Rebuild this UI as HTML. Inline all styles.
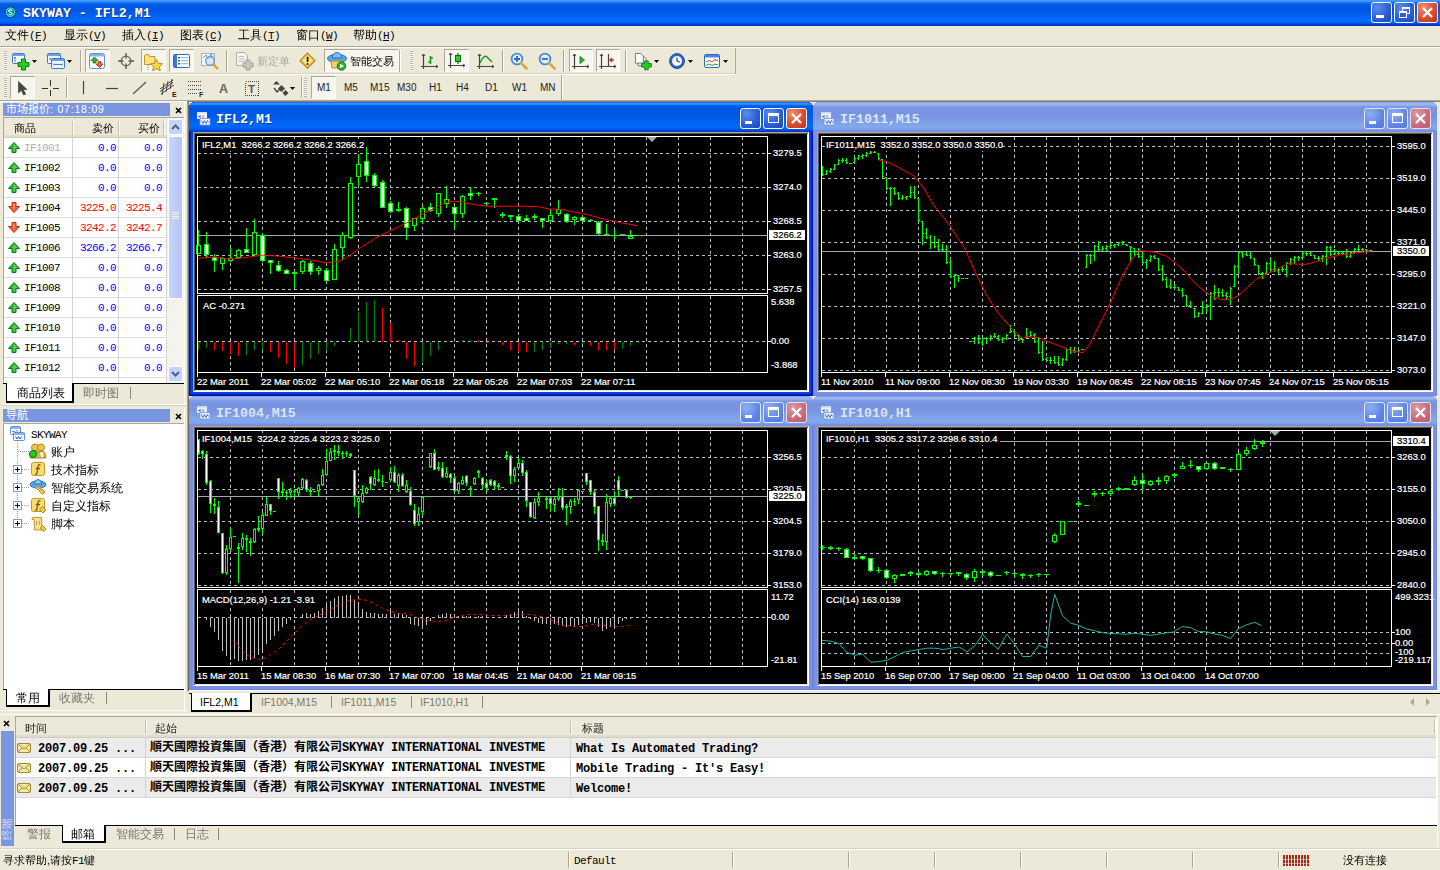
<!DOCTYPE html>
<html lang="zh"><head><meta charset="utf-8"><title>SKYWAY - IFL2,M1</title>
<style>
*{box-sizing:border-box;margin:0;padding:0}
html,body{width:1440px;height:870px;overflow:hidden;background:#ece9d8}
body{font-family:"Liberation Sans","Noto Sans CJK SC",sans-serif;font-size:12px;color:#000;position:relative}
#root{position:absolute;left:0;top:0;width:1440px;height:870px;overflow:hidden;background:#ece9d8}
.a{position:absolute}
.m{font-family:"Liberation Mono","WenQuanYi Zen Hei",monospace;font-size:11px;letter-spacing:-0.6px}
.th{font-family:"Liberation Sans",sans-serif;font-size:10.5px;letter-spacing:.8px}
.mb{font-family:"Liberation Mono","Noto Sans CJK SC",monospace;letter-spacing:-0.2px;font-weight:bold}
.cj{font-family:"Liberation Sans","WenQuanYi Zen Hei","Noto Sans CJK SC",sans-serif;font-size:12px;line-height:14px;white-space:nowrap}
.tt{font-family:"Liberation Mono","Noto Sans CJK SC",monospace;font-weight:bold;font-size:13.3px;color:#fff;white-space:nowrap;letter-spacing:0}
#title{left:0;top:0;width:1440px;height:26px;background:linear-gradient(to bottom,#4598ff 0,#3d90fb 1.5px,#0a6cf4 3px,#0060ec 4px,#0058e6 6px,#0055e2 9px,#005ae8 12px,#0062f4 16px,#066bff 20px,#0468fa 22px,#0054e0 23.5px,#0038c8 24.5px,#0034c0 26px)}
.wbtn{position:absolute;width:21px;height:21px;border:1px solid #fff;border-radius:3px}
.wb{background:radial-gradient(circle at 30% 25%,#5a8cf0 0,#2c5fd8 55%,#1e48b8 100%)}
.wr{background:radial-gradient(circle at 30% 25%,#f09078 0,#dc4c2c 55%,#b83418 100%)}
.wbi{background:radial-gradient(circle at 30% 25%,#8fb0f4 0,#5f86e6 60%,#5078d8 100%);border-color:#dfe8fb}
.wri{background:radial-gradient(circle at 30% 25%,#dc98a4 0,#c86a7c 60%,#b85c70 100%);border-color:#f0dce4}
.tb-chk{position:absolute;border:1px solid #aca899;border-right-color:#fff;border-bottom-color:#fff;background:#f6f5ee}
.sepv{position:absolute;width:2px;border-left:1px solid #aca899;border-right:1px solid #fff}
.grip{position:absolute;width:3px;background:repeating-linear-gradient(to bottom,#bab7a6 0,#bab7a6 1px,#fff 1px,#fff 2px)}
.tf{position:absolute;top:82px;font-size:10px;color:#222;font-family:"Liberation Sans",sans-serif;white-space:nowrap}
.win{position:absolute;border-radius:6px 6px 0 0}
.wact{background:#0044e6;box-shadow:inset 1px 0 0 #0010a0,inset -1px 0 0 #0010a0,inset 0 -1px 0 #0010a0,inset 2px 0 0 #0024c0,inset -2px 0 0 #0020b4,inset 0 -2px 0 #0020b4}
.wina{background:#7a90e4;box-shadow:inset 1px 0 0 #6c84dc,inset -1px 0 0 #6c84dc,inset 0 -1px 0 #6c84dc}
.wtitle{position:absolute;left:0;top:0;width:100%;height:30px;border-radius:6px 6px 0 0}
.wact .wtitle{background:linear-gradient(to bottom,#0848d8 0,#3a92f8 1px,#2a86f6 2.5px,#0068f0 3.5px,#005ae8 5px,#0056e4 8px,#0058e6 14px,#0060f0 18px,#0068fa 22px,#0066f8 26px,#0050e0 28px,#0038c8 29.5px,#0038c8 30px)}
.wina .wtitle{background:linear-gradient(to bottom,#6f88e0 0,#9db9f0 1px,#98b4ee 3px,#7d9ee6 4.5px,#7893e0 7px,#7994e0 14px,#7e9ee6 19px,#82a8ea 24px,#80a4e8 27px,#7a92e4 28.5px,#7a86e8 30px)}
.client{position:absolute;left:4px;top:30px;width:616px;height:260px;background:#000;border:1px solid #aca899;border-right-color:#fff;border-bottom-color:#fff;box-shadow:inset 1px 1px 0 #5a584e,inset -1px -1px 0 #ece9d8}
.hdr{position:absolute;background:#7a96df;color:#fff;font-size:11px;line-height:13px;white-space:nowrap;overflow:hidden}
.lv-h{position:absolute;background:#ece9d8;border-bottom:1px solid #d0cdbc;box-shadow:inset 0 -2px 0 #e0ddcc}
.tabact{position:absolute;background:#fff;border:1px solid #000;border-top:none;border-right-width:2px;border-bottom-width:2px}
.gray{color:#7a7a70}
.c11{font-size:11px}
.cb{font-family:"Liberation Mono","Noto Sans CJK SC",sans-serif;font-weight:bold}
</style></head>
<body><div id="root">
<div class="a" id="title"></div>
<svg class="a" style="left:4px;top:5px" width="16" height="16" viewBox="0 0 16 16" ><circle cx="6.4" cy="7.2" r="5.4" fill="#1fd4e0" stroke="#0a3a50" stroke-width="1"/><circle cx="6.4" cy="7.2" r="3.3" fill="#0c6c80"/><path d="M8.2 5.6 Q6.4 4.2 4.8 5.6 Q4.2 7 6.4 7.2 Q8.6 7.6 8 8.9 Q6.4 10.2 4.6 8.9" stroke="#fff" stroke-width="1.1" fill="none"/></svg>
<div class="a tt" style="left:23px;top:6px;line-height:16px;text-shadow:1px 1px 0 #0a3a9a">SKYWAY - IFL2,M1</div>
<div class="wbtn wb" style="left:1371px;top:2px"></div><div class="a" style="left:1376px;top:15px;width:8px;height:3px;background:#fff"></div>
<div class="wbtn wb" style="left:1394px;top:2px"></div>
<svg class="a" style="left:1394px;top:2px" width="21" height="21" shape-rendering="crispEdges"><rect x="8.5" y="5.5" width="7" height="6" fill="none" stroke="#fff"/><rect x="8" y="5" width="8" height="2" fill="#fff"/><rect x="5.5" y="9.5" width="7" height="6" fill="#2c5fd8" stroke="#fff"/><rect x="5" y="9" width="8" height="2" fill="#fff"/></svg>
<div class="wbtn wr" style="left:1417px;top:2px"></div>
<svg class="a" style="left:1417px;top:2px" width="21" height="21"><path d="M6 6 L15 15 M15 6 L6 15" stroke="#fff" stroke-width="2.2" fill="none"/></svg>
<div class="a cj" style="left:5px;top:28px">文件<span class="m">(F)</span></div>
<div class="a" style="left:35px;top:40px;width:6px;height:1px;background:#000"></div>
<div class="a cj" style="left:64px;top:28px">显示<span class="m">(V)</span></div>
<div class="a" style="left:94px;top:40px;width:6px;height:1px;background:#000"></div>
<div class="a cj" style="left:122px;top:28px">插入<span class="m">(I)</span></div>
<div class="a" style="left:152px;top:40px;width:6px;height:1px;background:#000"></div>
<div class="a cj" style="left:180px;top:28px">图表<span class="m">(C)</span></div>
<div class="a" style="left:210px;top:40px;width:6px;height:1px;background:#000"></div>
<div class="a cj" style="left:238px;top:28px">工具<span class="m">(T)</span></div>
<div class="a" style="left:268px;top:40px;width:6px;height:1px;background:#000"></div>
<div class="a cj" style="left:296px;top:28px">窗口<span class="m">(W)</span></div>
<div class="a" style="left:326px;top:40px;width:6px;height:1px;background:#000"></div>
<div class="a cj" style="left:353px;top:28px">帮助<span class="m">(H)</span></div>
<div class="a" style="left:383px;top:40px;width:6px;height:1px;background:#000"></div>
<div class="a" style="left:0;top:46px;width:1440px;height:1px;background:#aca899"></div>
<div class="a" style="left:0;top:47px;width:1440px;height:1px;background:#fff"></div>
<div class="a" style="left:0;top:73px;width:736px;height:1px;background:#d8d4c2"></div><div class="a" style="left:0;top:74px;width:736px;height:1px;background:#fff"></div>
<div class="a" style="left:735px;top:48px;width:1px;height:26px;background:#aca899"></div>
<div class="grip" style="left:4px;top:51px;height:20px"></div>
<div class="grip" style="left:410px;top:51px;height:20px"></div>
<div class="sepv" style="left:80px;top:50px;height:22px"></div>
<div class="sepv" style="left:226px;top:50px;height:22px"></div>
<div class="sepv" style="left:399px;top:50px;height:22px"></div>
<div class="sepv" style="left:502px;top:50px;height:22px"></div>
<div class="sepv" style="left:563px;top:50px;height:22px"></div>
<div class="sepv" style="left:625px;top:50px;height:22px"></div>
<div class="tb-chk" style="left:85px;top:49px;width:25px;height:23px"></div>
<div class="tb-chk" style="left:141px;top:49px;width:25px;height:23px"></div>
<div class="tb-chk" style="left:169px;top:49px;width:25px;height:23px"></div>
<div class="tb-chk" style="left:324px;top:49px;width:75px;height:23px"></div>
<div class="tb-chk" style="left:444px;top:49px;width:25px;height:23px"></div>
<div class="tb-chk" style="left:569px;top:49px;width:24px;height:23px"></div>
<div class="tb-chk" style="left:596px;top:49px;width:24px;height:23px"></div>
<svg class="a" style="left:0;top:44px" width="740" height="32" viewBox="0 0 740 32"><g transform="translate(12,9)"><rect x="0.5" y="0.5" width="12" height="10" rx="1" fill="#fff" stroke="#3a78d0"/><rect x="1" y="1" width="11" height="2" fill="#6aa0e8"/><path d="M3 4 L3 9 M2 5.5 L3 4 L4 5.5" stroke="#5080c0" fill="none"/><path d="M9.5 6 L13.5 6 L13.5 9.5 L17 9.5 L17 13.5 L13.5 13.5 L13.5 17 L9.5 17 L9.5 13.5 L6 13.5 L6 9.5 L9.5 9.5 Z" fill="#2cc82c" stroke="#0a7a14" stroke-width="1"/></g><g transform="translate(32,16)"><path d="M0 0 L5 0 L2.5 3 Z" fill="#000"/></g><g transform="translate(47,9)"><rect x="0.5" y="0.5" width="13" height="10" rx="1" fill="#eef4ff" stroke="#3a78d0"/><rect x="1" y="1" width="12" height="2" fill="#6aa0e8"/><path d="M3 6 L11 6 M3 5 L3 7 M11 5 L11 7" stroke="#5080c0"/><rect x="4.5" y="5.5" width="13" height="10" rx="1" fill="#eef4ff" stroke="#3a78d0"/><rect x="5" y="6" width="12" height="2" fill="#6aa0e8"/><path d="M7 11.5 L15 11.5 M7 10.5 L7 12.5 M15 10.5 L15 12.5" stroke="#5080c0"/></g><g transform="translate(67,16)"><path d="M0 0 L5 0 L2.5 3 Z" fill="#000"/></g><g transform="translate(89,9)"><rect x="0.5" y="0.5" width="15" height="15" rx="2" fill="#fff" stroke="#5a90e0" stroke-width="1"/><rect x="1" y="1" width="14" height="2.5" fill="#8ab4f0"/><path d="M5.5 4 L9 7.5 L7 7.5 L7 10 L4 10 L4 7.5 L2 7.5 Z" fill="#2cb82c" stroke="#0a7a14" stroke-width=".8"/><path d="M10.5 14.5 L14 11 L12 11 L12 8.5 L9 8.5 L9 11 L7 11 Z" fill="#f0603c" stroke="#b83010" stroke-width=".8"/></g><g transform="translate(118,9)"><circle cx="8" cy="8" r="4.8" fill="none" stroke="#666" stroke-width="1.3"/><path d="M8 0 L8 5.5 M8 10.5 L8 16 M0 8 L5.5 8 M10.5 8 L16 8" stroke="#555" stroke-width="1.3"/></g><g transform="translate(144,9)"><path d="M0.5 3 L0.5 11.5 L11 11.5 L11 3.5 L5.5 3.5 L4.5 1.5 L1.5 1.5 Z" fill="#f8e08a" stroke="#c09a28"/><path d="M4 12 L4 17" stroke="#777" stroke-dasharray="1 1"/><path d="M12.5 6.5 L14.3 10.3 L18.5 10.8 L15.4 13.6 L16.3 17.8 L12.5 15.7 L8.7 17.8 L9.6 13.6 L6.5 10.8 L10.7 10.3 Z" fill="#f8d848" stroke="#b8901c" stroke-width="1"/></g><g transform="translate(173,10)"><rect x="0.5" y="0.5" width="16" height="13" rx="1" fill="#fff" stroke="#2a68c8" stroke-width="1"/><rect x="1" y="1" width="3" height="12" fill="#3a78d8"/><rect x="5" y="3" width="2" height="1.5" fill="#d02020"/><rect x="5" y="6" width="2" height="1.5" fill="#209020"/><rect x="5" y="9" width="2" height="1.5" fill="#d02020"/><path d="M8 3.7 L15 3.7 M8 6.7 L15 6.7 M8 9.7 L15 9.7" stroke="#8aa8d8"/></g><g transform="translate(201,8)"><rect x="0.5" y="1.5" width="13" height="12" fill="#f4f8ff" stroke="#9ab0d0"/><path d="M2 6 L5 3 L7 7 L10 2 L12 5" stroke="#6a88c0" fill="none"/><circle cx="9" cy="9" r="4.2" fill="#cfe4fa" fill-opacity=".8" stroke="#7a98c8" stroke-width="1.4"/><path d="M12.2 12.2 L17 17" stroke="#d8a030" stroke-width="2.4"/></g><g transform="translate(236,8)"><path d="M0.5 0.5 L8.5 0.5 L11.5 3.5 L11.5 13.5 L0.5 13.5 Z" fill="#f4f4f0" stroke="#b0b0a8"/><path d="M2.5 4.5 L8 4.5 M2.5 7 L9 7 M2.5 9.5 L9 9.5" stroke="#c0c0b8"/><path d="M10 8 L14 8 L14 11 L17 11 L17 15 L14 15 L14 18 L10 18 L10 15 L7 15 L7 11 L10 11 Z" fill="#c8c8c0" stroke="#a0a098"/></g><g transform="translate(299,8)"><path d="M8.5 1.2 L16 8.7 L8.5 16.2 L1 8.7 Z" fill="#f6cc48" stroke="#b08820" stroke-width="1.2"/><path d="M8.5 3.5 L13.5 8.7 L8.5 13.8 L3.5 8.7 Z" fill="#fbe48a"/><rect x="7.7" y="4.8" width="1.8" height="5.2" fill="#222"/><rect x="7.7" y="11.2" width="1.8" height="1.8" fill="#222"/></g><g transform="translate(327,8)"><ellipse cx="10" cy="6.5" rx="9.5" ry="4.2" fill="#58a8e8" stroke="#2a70b8"/><path d="M5 6 Q6 0.5 10 0.5 Q14 0.5 15 6 Z" fill="#78c0f4" stroke="#2a70b8"/><path d="M4 9 L5 16 L14 16 L16 9 Z" fill="#f0d070" stroke="#b89028"/><circle cx="14.5" cy="14" r="4.2" fill="#28b828" stroke="#0a7a14"/><path d="M13 11.8 L13 16.2 L17 14 Z" fill="#fff"/></g><g transform="translate(421,9)"><path d="M2.5 1 L2.5 16 M0 13.5 L17 13.5" stroke="#444" stroke-width="1.2"/><path d="M1 3 L2.5 1 L4 3 M15 12 L17 13.5 L15 15" stroke="#444" fill="none"/><path d="M9.5 3 L9.5 11 M9.5 5 L12 5 M7 9 L9.5 9" stroke="#1a9a1a" stroke-width="1.6"/></g><g transform="translate(448,8)"><path d="M2.5 1 L2.5 16 M0 13.5 L17 13.5" stroke="#444" stroke-width="1.2"/><path d="M1 3 L2.5 1 L4 3 M15 12 L17 13.5 L15 15" stroke="#444" fill="none"/><path d="M10 1 L10 12" stroke="#0a6a0a" stroke-width="1.2"/><rect x="7.5" y="3.5" width="5" height="6" fill="#28c828" stroke="#0a6a0a"/></g><g transform="translate(477,9)"><path d="M2.5 1 L2.5 16 M0 13.5 L17 13.5" stroke="#444" stroke-width="1.2"/><path d="M1 3 L2.5 1 L4 3 M15 12 L17 13.5 L15 15" stroke="#444" fill="none"/><path d="M3 10 Q7 1 10 4 Q13 7 15 9" stroke="#1a9a1a" stroke-width="1.5" fill="none"/></g><g transform="translate(510,8)"><circle cx="7" cy="7" r="5.4" fill="#e4f0fc" stroke="#4a88d8" stroke-width="1.8"/><path d="M11.2 11.2 L16.5 16.5" stroke="#d8a838" stroke-width="2.6" stroke-linecap="round"/><path d="M4 7 L10 7 M7 4 L7 10" stroke="#2a68c8" stroke-width="1.8"/></g><g transform="translate(538,8)"><circle cx="7" cy="7" r="5.4" fill="#e4f0fc" stroke="#4a88d8" stroke-width="1.8"/><path d="M11.2 11.2 L16.5 16.5" stroke="#d8a838" stroke-width="2.6" stroke-linecap="round"/><path d="M4 7 L10 7" stroke="#2a68c8" stroke-width="1.8"/></g><g transform="translate(572,9)"><path d="M2.5 1 L2.5 16 M0 13.5 L17 13.5" stroke="#444" stroke-width="1.2"/><path d="M1 3 L2.5 1 L4 3 M15 12 L17 13.5 L15 15" stroke="#444" fill="none"/><path d="M8 3.5 L12.5 7 L8 10.5 Z" fill="#28b828" stroke="#0a7a14" stroke-width=".8"/></g><g transform="translate(599,9)"><path d="M2.5 1 L2.5 16 M0 13.5 L17 13.5" stroke="#444" stroke-width="1.2"/><path d="M1 3 L2.5 1 L4 3 M15 12 L17 13.5 L15 15" stroke="#444" fill="none"/><path d="M9.5 1 L9.5 13" stroke="#444" stroke-width="1.2"/><path d="M15 7 L11 7 M13 5 L11 7 L13 9" stroke="#d03020" stroke-width="1.4" fill="none"/></g><g transform="translate(635,9)"><g transform="scale(.88)"><path d="M3.5 3.5 L3.5 14.5 L12.5 14.5 L12.5 6.5 L9.5 3.5 Z" fill="#fff" stroke="#666"/><path d="M0.5 0.5 L0.5 11.5 L9.5 11.5 L9.5 3.5 L6.5 0.5 Z" fill="#fff" stroke="#666"/><path d="M11 9 L15 9 L15 12 L18.5 12 L18.5 16 L15 16 L15 19 L11 19 L11 16 L7.5 16 L7.5 12 L11 12 Z" fill="#2cc82c" stroke="#0a7a14"/></g></g><g transform="translate(654,16)"><path d="M0 0 L5 0 L2.5 3 Z" fill="#000"/></g><g transform="translate(669,9)"><circle cx="8" cy="8" r="7.4" fill="#2a68c8" stroke="#1a4898" stroke-width="1"/><circle cx="8" cy="8" r="5" fill="#f4f8ff"/><path d="M8 4.5 L8 8 L10.8 9.2" stroke="#333" stroke-width="1.1" fill="none"/></g><g transform="translate(688,16)"><path d="M0 0 L5 0 L2.5 3 Z" fill="#000"/></g><g transform="translate(704,10)"><rect x="0.5" y="0.5" width="15" height="13" rx="1.5" fill="#fff" stroke="#2a68c8" stroke-width="1"/><rect x="1" y="1" width="14" height="2.5" fill="#4a88e0"/><path d="M2 8 L5 6.5 L8 8 L11 5.5 L14 7" stroke="#d04020" fill="none"/><path d="M2 11.5 L5 10 L8 11.5 L11 10 L14 11" stroke="#209a20" fill="none"/></g><g transform="translate(723,16)"><path d="M0 0 L5 0 L2.5 3 Z" fill="#000"/></g></svg>
<div class="a cj c11" style="left:257px;top:54px;color:#aca899">新定单</div>
<div class="a cj c11" style="left:350px;top:54px">智能交易</div>
<div class="a" style="left:0;top:100px;width:1440px;height:1px;background:#aca899"></div>
<div class="a" style="left:0;top:101px;width:1440px;height:1px;background:#fff"></div>
<div class="grip" style="left:4px;top:78px;height:19px"></div>
<div class="grip" style="left:304px;top:78px;height:19px"></div>
<div class="a" style="left:561px;top:75px;width:1px;height:25px;background:#aca899"></div>
<div class="a" style="left:562px;top:75px;width:1px;height:25px;background:#fff"></div>
<div class="sepv" style="left:66px;top:77px;height:21px"></div>
<div class="sepv" style="left:301px;top:77px;height:21px"></div>
<div class="tb-chk" style="left:10px;top:76px;width:25px;height:23px"></div>
<div class="tb-chk" style="left:311px;top:76px;width:25px;height:23px"></div>
<svg class="a" style="left:0;top:74px" width="310" height="27" viewBox="0 0 310 27"><g transform="translate(18,7)"><path d="M0.5 0.5 L0.5 12 L3.3 9.3 L5.6 14 L7.6 13 L5.3 8.5 L9 8.5 Z" fill="#444" stroke="#333" stroke-width=".6"/></g><g transform="translate(42,6)"><path d="M8.5 0 L8.5 6 M8.5 10 L8.5 16 M0 8.5 L6 8.5 M11 8.5 L17 8.5" stroke="#333" stroke-width="1" shape-rendering="crispEdges"/></g><g transform="translate(83,7)"><path d="M0.5 0 L0.5 13" stroke="#444" stroke-width="1.2"/></g><g transform="translate(106,14)"><path d="M0 0.5 L12 0.5" stroke="#444" stroke-width="1.2"/></g><g transform="translate(133,8)"><path d="M0 12 L13 0" stroke="#555" stroke-width="1.2"/></g><g transform="translate(160,6)"><path d="M0 9 L13 0 M1 14 L14 5 M0 11.5 L13 2.5 M4 3 L2 15 M8 1 L6 12 M12 -1 L10 9" stroke="#444" stroke-width="1" fill="none"/><text x="12" y="17" font-size="7" font-weight="bold" font-family="Liberation Sans,sans-serif" fill="#222">E</text></g><g transform="translate(188,7)"><path d="M0 0.5 L14 0.5 M0 4.5 L14 4.5 M0 8.5 L14 8.5 M0 12.5 L10 12.5" stroke="#444" stroke-dasharray="1 1"/><text x="11" y="16" font-size="7" font-weight="bold" font-family="Liberation Sans,sans-serif" fill="#222">F</text></g><g transform="translate(219,7)"><text x="0" y="11.5" font-size="12.5" font-weight="bold" font-family="Liberation Sans,sans-serif" fill="#666">A</text></g><g transform="translate(245,7)"><rect x="0.5" y="0.5" width="13" height="14" fill="none" stroke="#444" stroke-dasharray="1 1" shape-rendering="crispEdges"/><text x="3" y="12" font-size="11.5" font-weight="bold" font-family="Liberation Sans,sans-serif" fill="#555">T</text></g><g transform="translate(272,7)"><path d="M4.5 0 L8 3.5 L1 3.5 Z M9.5 4 L13 7.5 L9.5 11 L6 7.5 Z M13.5 9 L16.5 12 L13.5 15 L10.5 12 Z" fill="#444"/><path d="M2 7 L5 11 L8 8" stroke="#444" stroke-width="1.4" fill="none"/></g><g transform="translate(290,13)"><path d="M0 0 L5 0 L2.5 3 Z" fill="#000"/></g></svg>
<div class="tf" style="left:317px">M1</div>
<div class="tf" style="left:344px">M5</div>
<div class="tf" style="left:370px">M15</div>
<div class="tf" style="left:397px">M30</div>
<div class="tf" style="left:429px">H1</div>
<div class="tf" style="left:456px">H4</div>
<div class="tf" style="left:485px">D1</div>
<div class="tf" style="left:512px">W1</div>
<div class="tf" style="left:540px">MN</div>
<div class="hdr" style="left:3px;top:103px;width:167px;height:13px;padding-left:3px">市场报价<span class="th">: 07:18:09</span></div>
<svg class="a" style="left:175px;top:107px" width="8" height="7" viewBox="0 0 8 7" ><path d="M1 1 L6 6 M6 1 L1 6" stroke="#000" stroke-width="1.7" fill="none"/></svg>
<div class="a" style="left:3px;top:117px;width:181px;height:266px;background:#fff;border-left:1px solid #aca899;border-top:1px solid #aca899"></div>
<div class="lv-h" style="left:4px;top:118px;width:164px;height:20px"></div>
<div class="a" style="left:72px;top:121px;width:1px;height:14px;background:#c5c2b2"></div><div class="a" style="left:73px;top:121px;width:1px;height:14px;background:#fff"></div>
<div class="a" style="left:118px;top:121px;width:1px;height:14px;background:#c5c2b2"></div><div class="a" style="left:119px;top:121px;width:1px;height:14px;background:#fff"></div>
<div class="a" style="left:163px;top:121px;width:1px;height:14px;background:#c5c2b2"></div><div class="a" style="left:164px;top:121px;width:1px;height:14px;background:#fff"></div>
<div class="a cj c11" style="left:14px;top:121px">商品</div>
<div class="a cj c11" style="left:92px;top:121px">卖价</div>
<div class="a cj c11" style="left:138px;top:121px">买价</div>
<div class="a" style="left:4px;top:157px;width:163px;height:1px;background:#dcdcdc"></div>
<svg class="a" style="left:8px;top:142px" width="12" height="11" viewBox="0 0 12 11" ><path d="M6 0.5 L11.5 6.5 L8 6.5 L8 10.5 L4 10.5 L4 6.5 L0.5 6.5 Z" fill="#2eb82e" stroke="#0e7a1a" stroke-width="1"/><path d="M6 2 L9.5 6 L7 6 L7 9.5 L5.5 9.5 L5.5 4 Z" fill="#7be07b" opacity=".6"/></svg>
<div class="a cj" style="left:24px;top:140px;color:#b0b0b0"><span class="m">IF1001</span></div>
<div class="a cj" style="left:73px;top:140px;width:43px;text-align:right;color:#0000ff"><span class="m">0.0</span></div>
<div class="a cj" style="left:119px;top:140px;width:43px;text-align:right;color:#0000ff"><span class="m">0.0</span></div>
<div class="a" style="left:4px;top:177px;width:163px;height:1px;background:#dcdcdc"></div>
<svg class="a" style="left:8px;top:162px" width="12" height="11" viewBox="0 0 12 11" ><path d="M6 0.5 L11.5 6.5 L8 6.5 L8 10.5 L4 10.5 L4 6.5 L0.5 6.5 Z" fill="#2eb82e" stroke="#0e7a1a" stroke-width="1"/><path d="M6 2 L9.5 6 L7 6 L7 9.5 L5.5 9.5 L5.5 4 Z" fill="#7be07b" opacity=".6"/></svg>
<div class="a cj" style="left:24px;top:160px;color:#000"><span class="m">IF1002</span></div>
<div class="a cj" style="left:73px;top:160px;width:43px;text-align:right;color:#0000ff"><span class="m">0.0</span></div>
<div class="a cj" style="left:119px;top:160px;width:43px;text-align:right;color:#0000ff"><span class="m">0.0</span></div>
<div class="a" style="left:4px;top:197px;width:163px;height:1px;background:#dcdcdc"></div>
<svg class="a" style="left:8px;top:182px" width="12" height="11" viewBox="0 0 12 11" ><path d="M6 0.5 L11.5 6.5 L8 6.5 L8 10.5 L4 10.5 L4 6.5 L0.5 6.5 Z" fill="#2eb82e" stroke="#0e7a1a" stroke-width="1"/><path d="M6 2 L9.5 6 L7 6 L7 9.5 L5.5 9.5 L5.5 4 Z" fill="#7be07b" opacity=".6"/></svg>
<div class="a cj" style="left:24px;top:180px;color:#000"><span class="m">IF1003</span></div>
<div class="a cj" style="left:73px;top:180px;width:43px;text-align:right;color:#0000ff"><span class="m">0.0</span></div>
<div class="a cj" style="left:119px;top:180px;width:43px;text-align:right;color:#0000ff"><span class="m">0.0</span></div>
<div class="a" style="left:4px;top:217px;width:163px;height:1px;background:#dcdcdc"></div>
<svg class="a" style="left:8px;top:202px" width="12" height="11" viewBox="0 0 12 11" ><path d="M6 10.5 L11.5 4.5 L8 4.5 L8 0.5 L4 0.5 L4 4.5 L0.5 4.5 Z" fill="#f0603c" stroke="#b83010" stroke-width="1"/><path d="M5 1.5 L6.5 1.5 L6.5 7 L5 5.5 Z" fill="#ffb09a" opacity=".7"/></svg>
<div class="a cj" style="left:24px;top:200px;color:#000"><span class="m">IF1004</span></div>
<div class="a cj" style="left:73px;top:200px;width:43px;text-align:right;color:#ff0000"><span class="m">3225.0</span></div>
<div class="a cj" style="left:119px;top:200px;width:43px;text-align:right;color:#ff0000"><span class="m">3225.4</span></div>
<div class="a" style="left:4px;top:237px;width:163px;height:1px;background:#dcdcdc"></div>
<svg class="a" style="left:8px;top:222px" width="12" height="11" viewBox="0 0 12 11" ><path d="M6 10.5 L11.5 4.5 L8 4.5 L8 0.5 L4 0.5 L4 4.5 L0.5 4.5 Z" fill="#f0603c" stroke="#b83010" stroke-width="1"/><path d="M5 1.5 L6.5 1.5 L6.5 7 L5 5.5 Z" fill="#ffb09a" opacity=".7"/></svg>
<div class="a cj" style="left:24px;top:220px;color:#000"><span class="m">IF1005</span></div>
<div class="a cj" style="left:73px;top:220px;width:43px;text-align:right;color:#ff0000"><span class="m">3242.2</span></div>
<div class="a cj" style="left:119px;top:220px;width:43px;text-align:right;color:#ff0000"><span class="m">3242.7</span></div>
<div class="a" style="left:4px;top:257px;width:163px;height:1px;background:#dcdcdc"></div>
<svg class="a" style="left:8px;top:242px" width="12" height="11" viewBox="0 0 12 11" ><path d="M6 0.5 L11.5 6.5 L8 6.5 L8 10.5 L4 10.5 L4 6.5 L0.5 6.5 Z" fill="#2eb82e" stroke="#0e7a1a" stroke-width="1"/><path d="M6 2 L9.5 6 L7 6 L7 9.5 L5.5 9.5 L5.5 4 Z" fill="#7be07b" opacity=".6"/></svg>
<div class="a cj" style="left:24px;top:240px;color:#000"><span class="m">IF1006</span></div>
<div class="a cj" style="left:73px;top:240px;width:43px;text-align:right;color:#0000ff"><span class="m">3266.2</span></div>
<div class="a cj" style="left:119px;top:240px;width:43px;text-align:right;color:#0000ff"><span class="m">3266.7</span></div>
<div class="a" style="left:4px;top:277px;width:163px;height:1px;background:#dcdcdc"></div>
<svg class="a" style="left:8px;top:262px" width="12" height="11" viewBox="0 0 12 11" ><path d="M6 0.5 L11.5 6.5 L8 6.5 L8 10.5 L4 10.5 L4 6.5 L0.5 6.5 Z" fill="#2eb82e" stroke="#0e7a1a" stroke-width="1"/><path d="M6 2 L9.5 6 L7 6 L7 9.5 L5.5 9.5 L5.5 4 Z" fill="#7be07b" opacity=".6"/></svg>
<div class="a cj" style="left:24px;top:260px;color:#000"><span class="m">IF1007</span></div>
<div class="a cj" style="left:73px;top:260px;width:43px;text-align:right;color:#0000ff"><span class="m">0.0</span></div>
<div class="a cj" style="left:119px;top:260px;width:43px;text-align:right;color:#0000ff"><span class="m">0.0</span></div>
<div class="a" style="left:4px;top:297px;width:163px;height:1px;background:#dcdcdc"></div>
<svg class="a" style="left:8px;top:282px" width="12" height="11" viewBox="0 0 12 11" ><path d="M6 0.5 L11.5 6.5 L8 6.5 L8 10.5 L4 10.5 L4 6.5 L0.5 6.5 Z" fill="#2eb82e" stroke="#0e7a1a" stroke-width="1"/><path d="M6 2 L9.5 6 L7 6 L7 9.5 L5.5 9.5 L5.5 4 Z" fill="#7be07b" opacity=".6"/></svg>
<div class="a cj" style="left:24px;top:280px;color:#000"><span class="m">IF1008</span></div>
<div class="a cj" style="left:73px;top:280px;width:43px;text-align:right;color:#0000ff"><span class="m">0.0</span></div>
<div class="a cj" style="left:119px;top:280px;width:43px;text-align:right;color:#0000ff"><span class="m">0.0</span></div>
<div class="a" style="left:4px;top:317px;width:163px;height:1px;background:#dcdcdc"></div>
<svg class="a" style="left:8px;top:302px" width="12" height="11" viewBox="0 0 12 11" ><path d="M6 0.5 L11.5 6.5 L8 6.5 L8 10.5 L4 10.5 L4 6.5 L0.5 6.5 Z" fill="#2eb82e" stroke="#0e7a1a" stroke-width="1"/><path d="M6 2 L9.5 6 L7 6 L7 9.5 L5.5 9.5 L5.5 4 Z" fill="#7be07b" opacity=".6"/></svg>
<div class="a cj" style="left:24px;top:300px;color:#000"><span class="m">IF1009</span></div>
<div class="a cj" style="left:73px;top:300px;width:43px;text-align:right;color:#0000ff"><span class="m">0.0</span></div>
<div class="a cj" style="left:119px;top:300px;width:43px;text-align:right;color:#0000ff"><span class="m">0.0</span></div>
<div class="a" style="left:4px;top:337px;width:163px;height:1px;background:#dcdcdc"></div>
<svg class="a" style="left:8px;top:322px" width="12" height="11" viewBox="0 0 12 11" ><path d="M6 0.5 L11.5 6.5 L8 6.5 L8 10.5 L4 10.5 L4 6.5 L0.5 6.5 Z" fill="#2eb82e" stroke="#0e7a1a" stroke-width="1"/><path d="M6 2 L9.5 6 L7 6 L7 9.5 L5.5 9.5 L5.5 4 Z" fill="#7be07b" opacity=".6"/></svg>
<div class="a cj" style="left:24px;top:320px;color:#000"><span class="m">IF1010</span></div>
<div class="a cj" style="left:73px;top:320px;width:43px;text-align:right;color:#0000ff"><span class="m">0.0</span></div>
<div class="a cj" style="left:119px;top:320px;width:43px;text-align:right;color:#0000ff"><span class="m">0.0</span></div>
<div class="a" style="left:4px;top:357px;width:163px;height:1px;background:#dcdcdc"></div>
<svg class="a" style="left:8px;top:342px" width="12" height="11" viewBox="0 0 12 11" ><path d="M6 0.5 L11.5 6.5 L8 6.5 L8 10.5 L4 10.5 L4 6.5 L0.5 6.5 Z" fill="#2eb82e" stroke="#0e7a1a" stroke-width="1"/><path d="M6 2 L9.5 6 L7 6 L7 9.5 L5.5 9.5 L5.5 4 Z" fill="#7be07b" opacity=".6"/></svg>
<div class="a cj" style="left:24px;top:340px;color:#000"><span class="m">IF1011</span></div>
<div class="a cj" style="left:73px;top:340px;width:43px;text-align:right;color:#0000ff"><span class="m">0.0</span></div>
<div class="a cj" style="left:119px;top:340px;width:43px;text-align:right;color:#0000ff"><span class="m">0.0</span></div>
<div class="a" style="left:4px;top:377px;width:163px;height:1px;background:#dcdcdc"></div>
<svg class="a" style="left:8px;top:362px" width="12" height="11" viewBox="0 0 12 11" ><path d="M6 0.5 L11.5 6.5 L8 6.5 L8 10.5 L4 10.5 L4 6.5 L0.5 6.5 Z" fill="#2eb82e" stroke="#0e7a1a" stroke-width="1"/><path d="M6 2 L9.5 6 L7 6 L7 9.5 L5.5 9.5 L5.5 4 Z" fill="#7be07b" opacity=".6"/></svg>
<div class="a cj" style="left:24px;top:360px;color:#000"><span class="m">IF1012</span></div>
<div class="a cj" style="left:73px;top:360px;width:43px;text-align:right;color:#0000ff"><span class="m">0.0</span></div>
<div class="a cj" style="left:119px;top:360px;width:43px;text-align:right;color:#0000ff"><span class="m">0.0</span></div>
<div class="a" style="left:72px;top:138px;width:1px;height:245px;background:#d4d4d4"></div>
<div class="a" style="left:118px;top:138px;width:1px;height:245px;background:#d4d4d4"></div>
<div class="a" style="left:166px;top:138px;width:1px;height:245px;background:#d4d4d4"></div>
<div class="a" style="left:167px;top:118px;width:17px;height:265px;background:#f4f3ee"></div>
<div class="a" style="left:168px;top:119px;width:15px;height:16px;background:#c4d4fa;border:1px solid #fff;border-radius:2px"></div>
<svg class="a" style="left:168px;top:119px" width="15" height="16"><path d="M4 10 L7.5 6.5 L11 10" stroke="#4d6185" stroke-width="2" fill="none"/></svg>
<div class="a" style="left:168px;top:136px;width:15px;height:163px;background:linear-gradient(to right,#c8d6fb,#bccbf8 60%,#b4c4f4);border:1px solid #fff;border-radius:2px"></div>
<div class="a" style="left:172px;top:212px;width:7px;height:1px;background:#eef4fe"></div>
<div class="a" style="left:172px;top:214px;width:7px;height:1px;background:#eef4fe"></div>
<div class="a" style="left:172px;top:216px;width:7px;height:1px;background:#eef4fe"></div>
<div class="a" style="left:172px;top:218px;width:7px;height:1px;background:#eef4fe"></div>
<div class="a" style="left:168px;top:366px;width:15px;height:16px;background:#c4d4fa;border:1px solid #fff;border-radius:2px"></div>
<svg class="a" style="left:168px;top:366px" width="15" height="16"><path d="M4 6 L7.5 9.5 L11 6" stroke="#4d6185" stroke-width="2" fill="none"/></svg>
<div class="a" style="left:3px;top:383px;width:181px;height:1px;background:#000"></div>
<div class="tabact" style="left:6px;top:383px;width:68px;height:20px"></div>
<div class="a cj" style="left:17px;top:386px">商品列表</div>
<div class="a cj gray" style="left:83px;top:386px">即时图</div>
<div class="a" style="left:130px;top:387px;width:1px;height:12px;background:#8a887a"></div>
<div class="a" style="left:184px;top:102px;width:1px;height:304px;background:#fff"></div>
<div class="a" style="left:1px;top:404px;width:186px;height:1px;background:#fff"></div>
<div class="a" style="left:1px;top:405px;width:186px;height:1px;background:#d8d4c2"></div>
<div class="hdr" style="left:3px;top:409px;width:167px;height:13px;padding-left:3px">导航</div>
<svg class="a" style="left:175px;top:413px" width="8" height="7" viewBox="0 0 8 7" ><path d="M1 1 L6 6 M6 1 L1 6" stroke="#000" stroke-width="1.7" fill="none"/></svg>
<div class="a" style="left:3px;top:423px;width:181px;height:267px;background:#fff;border-left:1px solid #aca899;border-top:1px solid #aca899"></div>
<div class="a cj" style="left:31px;top:427px"><span class="m">SKYWAY</span></div>
<div class="a cj" style="left:51px;top:445px">账户</div>
<div class="a cj" style="left:51px;top:463px">技术指标</div>
<div class="a cj" style="left:51px;top:481px">智能交易系统</div>
<div class="a cj" style="left:51px;top:499px">自定义指标</div>
<div class="a cj" style="left:51px;top:517px">脚本</div>
<svg class="a" style="left:0;top:424px" width="60" height="112" viewBox="0 0 60 112"><path d="M17.5 19 L17.5 95" stroke="#a0a0a0" stroke-dasharray="1 1" shape-rendering="crispEdges"/><path d="M18 27.5 L29 27.5" stroke="#a0a0a0" stroke-dasharray="1 1" shape-rendering="crispEdges"/><path d="M18 45.5 L29 45.5" stroke="#a0a0a0" stroke-dasharray="1 1" shape-rendering="crispEdges"/><path d="M18 63.5 L29 63.5" stroke="#a0a0a0" stroke-dasharray="1 1" shape-rendering="crispEdges"/><path d="M18 81.5 L29 81.5" stroke="#a0a0a0" stroke-dasharray="1 1" shape-rendering="crispEdges"/><path d="M18 99.5 L29 99.5" stroke="#a0a0a0" stroke-dasharray="1 1" shape-rendering="crispEdges"/><g transform="translate(13,41)"><rect x="0.5" y="0.5" width="8" height="8" fill="#fff" stroke="#8a9ab0" shape-rendering="crispEdges"/><path d="M2 4.5 L7 4.5 M4.5 2 L4.5 7" stroke="#000" shape-rendering="crispEdges"/></g><g transform="translate(13,59)"><rect x="0.5" y="0.5" width="8" height="8" fill="#fff" stroke="#8a9ab0" shape-rendering="crispEdges"/><path d="M2 4.5 L7 4.5 M4.5 2 L4.5 7" stroke="#000" shape-rendering="crispEdges"/></g><g transform="translate(13,77)"><rect x="0.5" y="0.5" width="8" height="8" fill="#fff" stroke="#8a9ab0" shape-rendering="crispEdges"/><path d="M2 4.5 L7 4.5 M4.5 2 L4.5 7" stroke="#000" shape-rendering="crispEdges"/></g><g transform="translate(13,95)"><rect x="0.5" y="0.5" width="8" height="8" fill="#fff" stroke="#8a9ab0" shape-rendering="crispEdges"/><path d="M2 4.5 L7 4.5 M4.5 2 L4.5 7" stroke="#000" shape-rendering="crispEdges"/></g><g transform="translate(10,2)"><rect x="0.5" y="0.5" width="10" height="8" rx="1" fill="#fff" stroke="#5a90e0"/><rect x="1" y="1" width="9" height="2" fill="#8ab4f0"/><path d="M2 5.5 L5 5.5 M6 4 L7.5 5.5 L6 7" stroke="#5a88d8" fill="none"/><rect x="3.5" y="6.5" width="11" height="8" rx="1" fill="#fff" stroke="#5a90e0"/><rect x="4" y="7" width="10" height="2" fill="#8ab4f0"/><path d="M5.5 10.5 L7 13 L8.5 10.5 L10 13 L11.5 10.5" stroke="#3a50c8" fill="none"/></g><g transform="translate(29,19)"><circle cx="6" cy="4.5" r="3.5" fill="#f0c050" stroke="#b08820"/><circle cx="12" cy="4.5" r="3.5" fill="#f0c050" stroke="#b08820"/><path d="M1 15 Q1 8 6.5 8 Q9 8 9 10 Q9 8 12 8 Q17 8 17 15 Z" fill="#e8b040" stroke="#b08820"/><circle cx="4" cy="11" r="3.6" fill="#28c828" stroke="#0a7a14"/><path d="M10 9 L15 9 L15 14 L12 15 Z" fill="#fff8e0" stroke="#b08820" stroke-width=".6"/></g><g transform="translate(31,38)"><rect x="0.5" y="0.5" width="13" height="13" rx="2" fill="#f8dc70" stroke="#c09828"/><path d="M9.5 3 Q7 2 6.8 5 L6 11 Q5.6 12.6 4 12 M4.8 6.5 L9 6.5" stroke="#7a5a10" stroke-width="1.3" fill="none"/></g><g transform="translate(30,55)"><ellipse cx="8" cy="5.5" rx="8" ry="3.6" fill="#58a8e8" stroke="#2a70b8"/><path d="M4 5 Q5 0.5 8 0.5 Q11 0.5 12 5 Z" fill="#88c8f8" stroke="#2a70b8"/><path d="M5 8 L8 11 L11 8 Z" fill="#f0d070" stroke="#b89028"/><path d="M11.5 9.5 L15 13 L12.5 15.5 L9 12 Z" fill="#f0c850" stroke="#b08820"/></g><g transform="translate(31,74)"><rect x="0.5" y="0.5" width="13" height="13" rx="2" fill="#f8dc70" stroke="#c09828"/><path d="M9.5 3 Q7 2 6.8 5 L6 11 Q5.6 12.6 4 12 M4.8 6.5 L9 6.5" stroke="#7a5a10" stroke-width="1.3" fill="none"/><path d="M11.5 8.5 L15 12 L12 15 L8.5 11.5 Z" fill="#f0c850" stroke="#b08820"/></g><g transform="translate(31,92)"><path d="M2.5 1.5 Q0.5 1.5 1 3.5 L3 3.5 L3.5 12 Q2 13.5 4 14 L11 14 Q12.5 13 11 11.5 L10.5 3 Q12 1.5 10 1.5 Z" fill="#f8e090" stroke="#c09828"/><path d="M5 6 L6 6 M8 6 L9 6 M5 8 L6 8 M8 8 L9 8" stroke="#8a6a18"/><path d="M11.5 9.5 L15 13 L12.5 15.5 L9 12 Z" fill="#f0c850" stroke="#b08820"/></g></svg>
<div class="a" style="left:3px;top:689px;width:181px;height:1px;background:#000"></div>
<div class="tabact" style="left:6px;top:689px;width:44px;height:18px"></div>
<div class="a cj" style="left:16px;top:691px">常用</div>
<div class="a cj gray" style="left:59px;top:691px">收藏夹</div>
<div class="a" style="left:106px;top:692px;width:1px;height:12px;background:#8a887a"></div>
<div class="a" style="left:184px;top:408px;width:1px;height:303px;background:#fff"></div>
<div class="a" style="left:1px;top:710px;width:186px;height:1px;background:#fff"></div>
<div class="a" style="left:187px;top:101px;width:1253px;height:591px;background:#ece9d8;border-left:1px solid #aca899;border-top:1px solid #8a8270"></div>
<div class="a" style="left:188px;top:102px;width:1px;height:589px;background:#716f64"></div>
<div class="win wact" style="left:189px;top:102px;width:624px;height:294px"><div class="wtitle"></div><div class="client"></div><div class="a tt" style="left:27px;top:10px;line-height:16px;color:#fff;text-shadow:1px 1px 0 #0a3a9a;">IFL2,M1</div><svg class="a" style="left:8px;top:10px" width="15" height="15" viewBox="0 0 15 15" ><g opacity="1"><rect x="0" y="1" width="10" height="6" fill="#fff"/><path d="M1 4.5 L3.5 4.5 M2.5 3 L4 4.5 L2.5 6 M5.5 3 L7 4.5 L5.5 6" stroke="#4a78d8" stroke-width="1" fill="none"/><rect x="0" y="0" width="10" height="1.5" fill="#cfe0ff"/><rect x="3" y="6.5" width="10" height="6.5" fill="#fff" stroke="#6a94e8" stroke-width=".8"/><path d="M4.5 8.5 L6 11.5 L7.5 8.5 L9 11.5 L10.5 8.5 L11.5 10.5" stroke="#3a50c8" stroke-width=".9" fill="none"/></g></svg><div class="wbtn wb" style="left:551px;top:6px"></div><div class="a" style="left:556px;top:19px;width:7px;height:3px;background:#fff"></div><div class="wbtn wb" style="left:574px;top:6px"></div><div class="a" style="left:579px;top:11px;width:11px;height:10px;border:1px solid #fff;border-top-width:3px"></div><div class="wbtn wr" style="left:597px;top:6px"></div><svg class="a" style="left:597px;top:6px" width="21" height="21"><path d="M6 6 L15 15 M15 6 L6 15" stroke="#fff" stroke-width="2.2" fill="none"/></svg></div>
<div class="win wina" style="left:813px;top:102px;width:624px;height:294px"><div class="wtitle"></div><div class="client"></div><div class="a tt" style="left:27px;top:10px;line-height:16px;color:#dbe5f8;">IF1011,M15</div><svg class="a" style="left:8px;top:10px" width="15" height="15" viewBox="0 0 15 15" ><g opacity=".88"><rect x="0" y="1" width="10" height="6" fill="#fff"/><path d="M1 4.5 L3.5 4.5 M2.5 3 L4 4.5 L2.5 6 M5.5 3 L7 4.5 L5.5 6" stroke="#4a78d8" stroke-width="1" fill="none"/><rect x="0" y="0" width="10" height="1.5" fill="#cfe0ff"/><rect x="3" y="6.5" width="10" height="6.5" fill="#fff" stroke="#6a94e8" stroke-width=".8"/><path d="M4.5 8.5 L6 11.5 L7.5 8.5 L9 11.5 L10.5 8.5 L11.5 10.5" stroke="#3a50c8" stroke-width=".9" fill="none"/></g></svg><div class="wbtn wbi" style="left:551px;top:6px"></div><div class="a" style="left:556px;top:19px;width:7px;height:3px;background:#fff"></div><div class="wbtn wbi" style="left:574px;top:6px"></div><div class="a" style="left:579px;top:11px;width:11px;height:10px;border:1px solid #fff;border-top-width:3px"></div><div class="wbtn wri" style="left:597px;top:6px"></div><svg class="a" style="left:597px;top:6px" width="21" height="21"><path d="M6 6 L15 15 M15 6 L6 15" stroke="#fff" stroke-width="2.2" fill="none"/></svg></div>
<div class="win wina" style="left:189px;top:396px;width:624px;height:294px"><div class="wtitle"></div><div class="client"></div><div class="a tt" style="left:27px;top:10px;line-height:16px;color:#dbe5f8;">IF1004,M15</div><svg class="a" style="left:8px;top:10px" width="15" height="15" viewBox="0 0 15 15" ><g opacity=".88"><rect x="0" y="1" width="10" height="6" fill="#fff"/><path d="M1 4.5 L3.5 4.5 M2.5 3 L4 4.5 L2.5 6 M5.5 3 L7 4.5 L5.5 6" stroke="#4a78d8" stroke-width="1" fill="none"/><rect x="0" y="0" width="10" height="1.5" fill="#cfe0ff"/><rect x="3" y="6.5" width="10" height="6.5" fill="#fff" stroke="#6a94e8" stroke-width=".8"/><path d="M4.5 8.5 L6 11.5 L7.5 8.5 L9 11.5 L10.5 8.5 L11.5 10.5" stroke="#3a50c8" stroke-width=".9" fill="none"/></g></svg><div class="wbtn wbi" style="left:551px;top:6px"></div><div class="a" style="left:556px;top:19px;width:7px;height:3px;background:#fff"></div><div class="wbtn wbi" style="left:574px;top:6px"></div><div class="a" style="left:579px;top:11px;width:11px;height:10px;border:1px solid #fff;border-top-width:3px"></div><div class="wbtn wri" style="left:597px;top:6px"></div><svg class="a" style="left:597px;top:6px" width="21" height="21"><path d="M6 6 L15 15 M15 6 L6 15" stroke="#fff" stroke-width="2.2" fill="none"/></svg></div>
<div class="win wina" style="left:813px;top:396px;width:624px;height:294px"><div class="wtitle"></div><div class="client"></div><div class="a tt" style="left:27px;top:10px;line-height:16px;color:#dbe5f8;">IF1010,H1</div><svg class="a" style="left:8px;top:10px" width="15" height="15" viewBox="0 0 15 15" ><g opacity=".88"><rect x="0" y="1" width="10" height="6" fill="#fff"/><path d="M1 4.5 L3.5 4.5 M2.5 3 L4 4.5 L2.5 6 M5.5 3 L7 4.5 L5.5 6" stroke="#4a78d8" stroke-width="1" fill="none"/><rect x="0" y="0" width="10" height="1.5" fill="#cfe0ff"/><rect x="3" y="6.5" width="10" height="6.5" fill="#fff" stroke="#6a94e8" stroke-width=".8"/><path d="M4.5 8.5 L6 11.5 L7.5 8.5 L9 11.5 L10.5 8.5 L11.5 10.5" stroke="#3a50c8" stroke-width=".9" fill="none"/></g></svg><div class="wbtn wbi" style="left:551px;top:6px"></div><div class="a" style="left:556px;top:19px;width:7px;height:3px;background:#fff"></div><div class="wbtn wbi" style="left:574px;top:6px"></div><div class="a" style="left:579px;top:11px;width:11px;height:10px;border:1px solid #fff;border-top-width:3px"></div><div class="wbtn wri" style="left:597px;top:6px"></div><svg class="a" style="left:597px;top:6px" width="21" height="21"><path d="M6 6 L15 15 M15 6 L6 15" stroke="#fff" stroke-width="2.2" fill="none"/></svg></div>
<svg id="charts" width="1440" height="870" viewBox="0 0 1440 870" shape-rendering="crispEdges" style="position:absolute;left:0;top:0;font-family:'Liberation Sans',sans-serif">
<line x1="230.5" y1="137" x2="230.5" y2="293" stroke="#b4bcc4" stroke-width="1" stroke-dasharray="3 3"/>
<line x1="230.5" y1="296" x2="230.5" y2="372" stroke="#b4bcc4" stroke-width="1" stroke-dasharray="3 3"/>
<line x1="262.5" y1="137" x2="262.5" y2="293" stroke="#b4bcc4" stroke-width="1" stroke-dasharray="3 3"/>
<line x1="262.5" y1="296" x2="262.5" y2="372" stroke="#b4bcc4" stroke-width="1" stroke-dasharray="3 3"/>
<line x1="294.5" y1="137" x2="294.5" y2="293" stroke="#b4bcc4" stroke-width="1" stroke-dasharray="3 3"/>
<line x1="294.5" y1="296" x2="294.5" y2="372" stroke="#b4bcc4" stroke-width="1" stroke-dasharray="3 3"/>
<line x1="326.5" y1="137" x2="326.5" y2="293" stroke="#b4bcc4" stroke-width="1" stroke-dasharray="3 3"/>
<line x1="326.5" y1="296" x2="326.5" y2="372" stroke="#b4bcc4" stroke-width="1" stroke-dasharray="3 3"/>
<line x1="358.5" y1="137" x2="358.5" y2="293" stroke="#b4bcc4" stroke-width="1" stroke-dasharray="3 3"/>
<line x1="358.5" y1="296" x2="358.5" y2="372" stroke="#b4bcc4" stroke-width="1" stroke-dasharray="3 3"/>
<line x1="390.5" y1="137" x2="390.5" y2="293" stroke="#b4bcc4" stroke-width="1" stroke-dasharray="3 3"/>
<line x1="390.5" y1="296" x2="390.5" y2="372" stroke="#b4bcc4" stroke-width="1" stroke-dasharray="3 3"/>
<line x1="422.5" y1="137" x2="422.5" y2="293" stroke="#b4bcc4" stroke-width="1" stroke-dasharray="3 3"/>
<line x1="422.5" y1="296" x2="422.5" y2="372" stroke="#b4bcc4" stroke-width="1" stroke-dasharray="3 3"/>
<line x1="454.5" y1="137" x2="454.5" y2="293" stroke="#b4bcc4" stroke-width="1" stroke-dasharray="3 3"/>
<line x1="454.5" y1="296" x2="454.5" y2="372" stroke="#b4bcc4" stroke-width="1" stroke-dasharray="3 3"/>
<line x1="486.5" y1="137" x2="486.5" y2="293" stroke="#b4bcc4" stroke-width="1" stroke-dasharray="3 3"/>
<line x1="486.5" y1="296" x2="486.5" y2="372" stroke="#b4bcc4" stroke-width="1" stroke-dasharray="3 3"/>
<line x1="518.5" y1="137" x2="518.5" y2="293" stroke="#b4bcc4" stroke-width="1" stroke-dasharray="3 3"/>
<line x1="518.5" y1="296" x2="518.5" y2="372" stroke="#b4bcc4" stroke-width="1" stroke-dasharray="3 3"/>
<line x1="550.5" y1="137" x2="550.5" y2="293" stroke="#b4bcc4" stroke-width="1" stroke-dasharray="3 3"/>
<line x1="550.5" y1="296" x2="550.5" y2="372" stroke="#b4bcc4" stroke-width="1" stroke-dasharray="3 3"/>
<line x1="582.5" y1="137" x2="582.5" y2="293" stroke="#b4bcc4" stroke-width="1" stroke-dasharray="3 3"/>
<line x1="582.5" y1="296" x2="582.5" y2="372" stroke="#b4bcc4" stroke-width="1" stroke-dasharray="3 3"/>
<line x1="614.5" y1="137" x2="614.5" y2="293" stroke="#b4bcc4" stroke-width="1" stroke-dasharray="3 3"/>
<line x1="614.5" y1="296" x2="614.5" y2="372" stroke="#b4bcc4" stroke-width="1" stroke-dasharray="3 3"/>
<line x1="646.5" y1="137" x2="646.5" y2="293" stroke="#b4bcc4" stroke-width="1" stroke-dasharray="3 3"/>
<line x1="646.5" y1="296" x2="646.5" y2="372" stroke="#b4bcc4" stroke-width="1" stroke-dasharray="3 3"/>
<line x1="678.5" y1="137" x2="678.5" y2="293" stroke="#b4bcc4" stroke-width="1" stroke-dasharray="3 3"/>
<line x1="678.5" y1="296" x2="678.5" y2="372" stroke="#b4bcc4" stroke-width="1" stroke-dasharray="3 3"/>
<line x1="710.5" y1="137" x2="710.5" y2="293" stroke="#b4bcc4" stroke-width="1" stroke-dasharray="3 3"/>
<line x1="710.5" y1="296" x2="710.5" y2="372" stroke="#b4bcc4" stroke-width="1" stroke-dasharray="3 3"/>
<line x1="742.5" y1="137" x2="742.5" y2="293" stroke="#b4bcc4" stroke-width="1" stroke-dasharray="3 3"/>
<line x1="742.5" y1="296" x2="742.5" y2="372" stroke="#b4bcc4" stroke-width="1" stroke-dasharray="3 3"/>
<line x1="198" y1="153.5" x2="767" y2="153.5" stroke="#b4bcc4" stroke-width="1" stroke-dasharray="3 3"/>
<line x1="198" y1="187.5" x2="767" y2="187.5" stroke="#b4bcc4" stroke-width="1" stroke-dasharray="3 3"/>
<line x1="198" y1="221.5" x2="767" y2="221.5" stroke="#b4bcc4" stroke-width="1" stroke-dasharray="3 3"/>
<line x1="198" y1="255.5" x2="767" y2="255.5" stroke="#b4bcc4" stroke-width="1" stroke-dasharray="3 3"/>
<line x1="198" y1="289.5" x2="767" y2="289.5" stroke="#b4bcc4" stroke-width="1" stroke-dasharray="3 3"/>
<line x1="198" y1="341.5" x2="767" y2="341.5" stroke="#b4bcc4" stroke-width="1" stroke-dasharray="3 3"/>
<line x1="198" y1="235.5" x2="767" y2="235.5" stroke="#a0a8b0" stroke-width="1"/>
<rect x="198" y="230" width="1" height="24" fill="#00ff00"/>
<rect x="196" y="245" width="5" height="9" fill="#00ff00"/>
<rect x="197" y="246" width="3" height="7" fill="#000"/>
<rect x="206" y="232" width="1" height="26" fill="#00ff00"/>
<rect x="204" y="244" width="5" height="11" fill="#00ff00"/>
<rect x="205" y="245" width="3" height="9" fill="#fff"/>
<rect x="214" y="254" width="1" height="18" fill="#00ff00"/>
<rect x="212" y="257" width="5" height="4" fill="#00ff00"/>
<rect x="213" y="258" width="3" height="2" fill="#fff"/>
<rect x="222" y="257" width="1" height="13" fill="#00ff00"/>
<rect x="220" y="258" width="5" height="6" fill="#00ff00"/>
<rect x="221" y="259" width="3" height="4" fill="#000"/>
<rect x="230" y="248" width="1" height="14" fill="#00ff00"/>
<rect x="228" y="258" width="5" height="3" fill="#00ff00"/>
<rect x="229" y="259" width="3" height="1" fill="#000"/>
<rect x="238" y="249" width="1" height="10" fill="#00ff00"/>
<rect x="236" y="250" width="5" height="8" fill="#00ff00"/>
<rect x="237" y="251" width="3" height="6" fill="#000"/>
<rect x="246" y="228" width="1" height="25" fill="#00ff00"/>
<rect x="244" y="249" width="5" height="4" fill="#00ff00"/>
<rect x="245" y="250" width="3" height="2" fill="#fff"/>
<rect x="254" y="219" width="1" height="37" fill="#00ff00"/>
<rect x="252" y="232" width="5" height="23" fill="#00ff00"/>
<rect x="253" y="233" width="3" height="21" fill="#000"/>
<rect x="262" y="234" width="1" height="28" fill="#00ff00"/>
<rect x="260" y="235" width="5" height="26" fill="#00ff00"/>
<rect x="261" y="236" width="3" height="24" fill="#fff"/>
<rect x="270" y="260" width="1" height="14" fill="#00ff00"/>
<rect x="268" y="260" width="5" height="3" fill="#00ff00"/>
<rect x="269" y="261" width="3" height="1" fill="#fff"/>
<rect x="278" y="261" width="1" height="11" fill="#00ff00"/>
<rect x="276" y="265" width="5" height="6" fill="#00ff00"/>
<rect x="277" y="266" width="3" height="4" fill="#fff"/>
<rect x="286" y="269" width="1" height="5" fill="#00ff00"/>
<rect x="284" y="270" width="5" height="4" fill="#00ff00"/>
<rect x="285" y="271" width="3" height="2" fill="#fff"/>
<rect x="294" y="271" width="1" height="17" fill="#00ff00"/>
<rect x="292" y="272" width="5" height="2" fill="#00ff00"/>
<rect x="302" y="260" width="1" height="14" fill="#00ff00"/>
<rect x="300" y="261" width="5" height="11" fill="#00ff00"/>
<rect x="301" y="262" width="3" height="9" fill="#000"/>
<rect x="310" y="261" width="1" height="14" fill="#00ff00"/>
<rect x="308" y="263" width="5" height="9" fill="#00ff00"/>
<rect x="309" y="264" width="3" height="7" fill="#fff"/>
<rect x="318" y="266" width="1" height="9" fill="#00ff00"/>
<rect x="316" y="268" width="5" height="3" fill="#00ff00"/>
<rect x="317" y="269" width="3" height="1" fill="#000"/>
<rect x="326" y="268" width="1" height="14" fill="#00ff00"/>
<rect x="324" y="270" width="5" height="11" fill="#00ff00"/>
<rect x="325" y="271" width="3" height="9" fill="#fff"/>
<rect x="334" y="244" width="1" height="36" fill="#00ff00"/>
<rect x="332" y="249" width="5" height="31" fill="#00ff00"/>
<rect x="333" y="250" width="3" height="29" fill="#000"/>
<rect x="342" y="232" width="1" height="28" fill="#00ff00"/>
<rect x="340" y="235" width="5" height="13" fill="#00ff00"/>
<rect x="341" y="236" width="3" height="11" fill="#000"/>
<rect x="350" y="177" width="1" height="62" fill="#00ff00"/>
<rect x="348" y="183" width="5" height="55" fill="#00ff00"/>
<rect x="349" y="184" width="3" height="53" fill="#000"/>
<rect x="358" y="154" width="1" height="33" fill="#00ff00"/>
<rect x="356" y="164" width="5" height="13" fill="#00ff00"/>
<rect x="357" y="165" width="3" height="11" fill="#000"/>
<rect x="366" y="147" width="1" height="35" fill="#00ff00"/>
<rect x="364" y="161" width="5" height="15" fill="#00ff00"/>
<rect x="365" y="162" width="3" height="13" fill="#fff"/>
<rect x="374" y="173" width="1" height="14" fill="#00ff00"/>
<rect x="372" y="175" width="5" height="11" fill="#00ff00"/>
<rect x="373" y="176" width="3" height="9" fill="#fff"/>
<rect x="382" y="180" width="1" height="28" fill="#00ff00"/>
<rect x="380" y="182" width="5" height="26" fill="#00ff00"/>
<rect x="381" y="183" width="3" height="24" fill="#fff"/>
<rect x="390" y="201" width="1" height="12" fill="#00ff00"/>
<rect x="388" y="203" width="5" height="9" fill="#00ff00"/>
<rect x="389" y="204" width="3" height="7" fill="#fff"/>
<rect x="398" y="202" width="1" height="10" fill="#00ff00"/>
<rect x="396" y="209" width="5" height="2" fill="#00ff00"/>
<rect x="406" y="207" width="1" height="33" fill="#00ff00"/>
<rect x="404" y="208" width="5" height="20" fill="#00ff00"/>
<rect x="405" y="209" width="3" height="18" fill="#fff"/>
<rect x="414" y="218" width="1" height="13" fill="#00ff00"/>
<rect x="412" y="218" width="5" height="8" fill="#00ff00"/>
<rect x="413" y="219" width="3" height="6" fill="#000"/>
<rect x="422" y="205" width="1" height="19" fill="#00ff00"/>
<rect x="420" y="208" width="5" height="11" fill="#00ff00"/>
<rect x="421" y="209" width="3" height="9" fill="#000"/>
<rect x="430" y="203" width="1" height="9" fill="#00ff00"/>
<rect x="428" y="207" width="5" height="4" fill="#00ff00"/>
<rect x="429" y="208" width="3" height="2" fill="#fff"/>
<rect x="438" y="193" width="1" height="24" fill="#00ff00"/>
<rect x="436" y="193" width="5" height="21" fill="#00ff00"/>
<rect x="437" y="194" width="3" height="19" fill="#000"/>
<rect x="446" y="186" width="1" height="22" fill="#00ff00"/>
<rect x="444" y="199" width="5" height="5" fill="#00ff00"/>
<rect x="445" y="200" width="3" height="3" fill="#000"/>
<rect x="454" y="206" width="1" height="23" fill="#00ff00"/>
<rect x="452" y="207" width="5" height="7" fill="#00ff00"/>
<rect x="453" y="208" width="3" height="5" fill="#fff"/>
<rect x="462" y="195" width="1" height="23" fill="#00ff00"/>
<rect x="460" y="196" width="5" height="18" fill="#00ff00"/>
<rect x="461" y="197" width="3" height="16" fill="#000"/>
<rect x="470" y="187" width="1" height="13" fill="#00ff00"/>
<rect x="468" y="193" width="5" height="3" fill="#00ff00"/>
<rect x="469" y="194" width="3" height="1" fill="#fff"/>
<rect x="478" y="192" width="1" height="4" fill="#00ff00"/>
<rect x="476" y="193" width="5" height="1" fill="#00ff00"/>
<rect x="486" y="202" width="1" height="3" fill="#00ff00"/>
<rect x="484" y="203" width="5" height="1" fill="#00ff00"/>
<rect x="494" y="198" width="1" height="10" fill="#00ff00"/>
<rect x="492" y="198" width="5" height="2" fill="#00ff00"/>
<rect x="502" y="212" width="1" height="6" fill="#00ff00"/>
<rect x="500" y="214" width="5" height="2" fill="#00ff00"/>
<rect x="510" y="215" width="1" height="5" fill="#00ff00"/>
<rect x="508" y="215" width="5" height="2" fill="#00ff00"/>
<rect x="518" y="214" width="1" height="8" fill="#00ff00"/>
<rect x="516" y="216" width="5" height="5" fill="#00ff00"/>
<rect x="517" y="217" width="3" height="3" fill="#fff"/>
<rect x="526" y="215" width="1" height="6" fill="#00ff00"/>
<rect x="524" y="218" width="5" height="3" fill="#00ff00"/>
<rect x="525" y="219" width="3" height="1" fill="#fff"/>
<rect x="534" y="214" width="1" height="6" fill="#00ff00"/>
<rect x="532" y="216" width="5" height="2" fill="#00ff00"/>
<rect x="542" y="218" width="1" height="10" fill="#00ff00"/>
<rect x="540" y="218" width="5" height="3" fill="#00ff00"/>
<rect x="541" y="219" width="3" height="1" fill="#fff"/>
<rect x="550" y="210" width="1" height="12" fill="#00ff00"/>
<rect x="548" y="215" width="5" height="6" fill="#00ff00"/>
<rect x="549" y="216" width="3" height="4" fill="#000"/>
<rect x="558" y="200" width="1" height="16" fill="#00ff00"/>
<rect x="556" y="209" width="5" height="5" fill="#00ff00"/>
<rect x="557" y="210" width="3" height="3" fill="#000"/>
<rect x="566" y="213" width="1" height="10" fill="#00ff00"/>
<rect x="564" y="214" width="5" height="8" fill="#00ff00"/>
<rect x="565" y="215" width="3" height="6" fill="#fff"/>
<rect x="574" y="216" width="1" height="9" fill="#00ff00"/>
<rect x="572" y="217" width="5" height="3" fill="#00ff00"/>
<rect x="573" y="218" width="3" height="1" fill="#000"/>
<rect x="582" y="217" width="1" height="5" fill="#00ff00"/>
<rect x="580" y="217" width="5" height="4" fill="#00ff00"/>
<rect x="581" y="218" width="3" height="2" fill="#fff"/>
<rect x="590" y="219" width="1" height="3" fill="#00ff00"/>
<rect x="588" y="220" width="5" height="1" fill="#00ff00"/>
<rect x="598" y="221" width="1" height="14" fill="#00ff00"/>
<rect x="596" y="222" width="5" height="12" fill="#00ff00"/>
<rect x="597" y="223" width="3" height="10" fill="#fff"/>
<rect x="606" y="224" width="1" height="11" fill="#00ff00"/>
<rect x="604" y="234" width="5" height="1" fill="#00ff00"/>
<rect x="614" y="230" width="1" height="9" fill="#00ff00"/>
<rect x="612" y="235" width="5" height="1" fill="#00ff00"/>
<rect x="622" y="234" width="1" height="1" fill="#00ff00"/>
<rect x="620" y="234" width="5" height="1" fill="#00ff00"/>
<rect x="630" y="230" width="1" height="9" fill="#00ff00"/>
<rect x="628" y="236" width="5" height="3" fill="#00ff00"/>
<rect x="629" y="237" width="3" height="1" fill="#000"/>
<rect x="638" y="235" width="1" height="1" fill="#00ff00"/>
<rect x="636" y="235" width="5" height="1" fill="#00ff00"/>
<polyline fill="none" stroke="#ff0000" stroke-width="1" shape-rendering="auto" points="197.8,258.4 214.4,257 229.1,259 246.7,257.4 262.3,255.1 278.3,256.1 294.6,258 310.6,260 326.4,262.9 338.5,261.3 346.3,258 358.5,249.2 374.5,238.5 390.5,230.6 406.3,223.2 420,215.4 430.4,210.1 438.4,206.2 446.4,202.3 454.4,201.3 462.4,201.7 466.9,203.3 478.4,205.2 486.4,206.2 502.1,206.2 518.3,206.2 537.3,206.6 550.5,209.1 558.6,209.1 566.6,210.5 582.6,213.6 590.6,215.4 598.6,217.9 606.6,219.9 614.6,221.3 622.7,223.2 630.7,224.4 637.9,225.8"/>
<rect x="198" y="342" width="1" height="8" fill="#008000"/>
<rect x="206" y="342" width="1" height="6" fill="#008000"/>
<rect x="214" y="342" width="1" height="8" fill="#ff0000"/>
<rect x="222" y="342" width="1" height="9" fill="#ff0000"/>
<rect x="230" y="342" width="1" height="12" fill="#ff0000"/>
<rect x="238" y="342" width="1" height="14" fill="#ff0000"/>
<rect x="246" y="342" width="1" height="13" fill="#008000"/>
<rect x="254" y="342" width="1" height="8" fill="#008000"/>
<rect x="262" y="342" width="1" height="8" fill="#008000"/>
<rect x="270" y="342" width="1" height="10" fill="#ff0000"/>
<rect x="278" y="342" width="1" height="16" fill="#ff0000"/>
<rect x="286" y="342" width="1" height="22" fill="#ff0000"/>
<rect x="294" y="342" width="1" height="26" fill="#ff0000"/>
<rect x="302" y="342" width="1" height="23" fill="#008000"/>
<rect x="310" y="342" width="1" height="17" fill="#008000"/>
<rect x="318" y="342" width="1" height="12" fill="#008000"/>
<rect x="326" y="342" width="1" height="9" fill="#008000"/>
<rect x="334" y="342" width="1" height="4" fill="#008000"/>
<rect x="350" y="328" width="1" height="14" fill="#008000"/>
<rect x="358" y="312" width="1" height="30" fill="#008000"/>
<rect x="366" y="302" width="1" height="40" fill="#008000"/>
<rect x="374" y="300" width="1" height="42" fill="#008000"/>
<rect x="382" y="308" width="1" height="34" fill="#ff0000"/>
<rect x="390" y="323" width="1" height="19" fill="#ff0000"/>
<rect x="398" y="340" width="1" height="2" fill="#ff0000"/>
<rect x="406" y="342" width="1" height="17" fill="#ff0000"/>
<rect x="414" y="342" width="1" height="24" fill="#ff0000"/>
<rect x="422" y="342" width="1" height="21" fill="#008000"/>
<rect x="430" y="342" width="1" height="14" fill="#008000"/>
<rect x="438" y="342" width="1" height="8" fill="#008000"/>
<rect x="454" y="341" width="1" height="1" fill="#008000"/>
<rect x="462" y="340" width="1" height="2" fill="#008000"/>
<rect x="470" y="340" width="1" height="2" fill="#008000"/>
<rect x="478" y="340" width="1" height="2" fill="#ff0000"/>
<rect x="486" y="342" width="1" height="1" fill="#ff0000"/>
<rect x="502" y="342" width="1" height="3" fill="#ff0000"/>
<rect x="510" y="342" width="1" height="8" fill="#ff0000"/>
<rect x="518" y="342" width="1" height="10" fill="#ff0000"/>
<rect x="526" y="342" width="1" height="10" fill="#ff0000"/>
<rect x="534" y="342" width="1" height="10" fill="#008000"/>
<rect x="542" y="342" width="1" height="8" fill="#008000"/>
<rect x="550" y="342" width="1" height="6" fill="#008000"/>
<rect x="558" y="342" width="1" height="2" fill="#008000"/>
<rect x="566" y="342" width="1" height="2" fill="#008000"/>
<rect x="574" y="342" width="1" height="3" fill="#ff0000"/>
<rect x="582" y="342" width="1" height="2" fill="#008000"/>
<rect x="590" y="342" width="1" height="4" fill="#ff0000"/>
<rect x="598" y="342" width="1" height="8" fill="#ff0000"/>
<rect x="606" y="342" width="1" height="8" fill="#ff0000"/>
<rect x="614" y="342" width="1" height="8" fill="#ff0000"/>
<rect x="622" y="342" width="1" height="7" fill="#008000"/>
<rect x="630" y="342" width="1" height="4" fill="#008000"/>
<rect x="638" y="342" width="1" height="1" fill="#008000"/>
<rect x="197.5" y="136.5" width="570" height="157" fill="none" stroke="#fff"/>
<rect x="197.5" y="295.5" width="570" height="77" fill="none" stroke="#fff"/>
<line x1="767" y1="153.5" x2="771" y2="153.5" stroke="#fff" stroke-width="1"/>
<text x="773" y="155.6" font-size="9.4" fill="#fff" stroke="#fff" stroke-width=".2" >3279.5</text>
<line x1="767" y1="187.5" x2="771" y2="187.5" stroke="#fff" stroke-width="1"/>
<text x="773" y="189.6" font-size="9.4" fill="#fff" stroke="#fff" stroke-width=".2" >3274.0</text>
<line x1="767" y1="221.5" x2="771" y2="221.5" stroke="#fff" stroke-width="1"/>
<text x="773" y="223.6" font-size="9.4" fill="#fff" stroke="#fff" stroke-width=".2" >3268.5</text>
<line x1="767" y1="255.5" x2="771" y2="255.5" stroke="#fff" stroke-width="1"/>
<text x="773" y="257.6" font-size="9.4" fill="#fff" stroke="#fff" stroke-width=".2" >3263.0</text>
<line x1="767" y1="289.5" x2="771" y2="289.5" stroke="#fff" stroke-width="1"/>
<text x="773" y="291.6" font-size="9.4" fill="#fff" stroke="#fff" stroke-width=".2" >3257.5</text>
<rect x="769" y="230" width="36" height="10" fill="#fff"/>
<text x="773" y="237.6" font-size="9.4" fill="#000" stroke="#000" stroke-width=".2" >3266.2</text>

<text x="771" y="304.6" font-size="9.4" fill="#fff" stroke="#fff" stroke-width=".2" >5.638</text>
<line x1="767" y1="341.5" x2="771" y2="341.5" stroke="#fff" stroke-width="1"/>
<text x="771" y="343.6" font-size="9.4" fill="#fff" stroke="#fff" stroke-width=".2" >0.00</text>

<text x="771" y="367.6" font-size="9.4" fill="#fff" stroke="#fff" stroke-width=".2" >-3.868</text>
<line x1="197.5" y1="372" x2="197.5" y2="377" stroke="#fff" stroke-width="1"/>
<text x="197" y="384.5" font-size="9.4" fill="#fff" stroke="#fff" stroke-width=".2" >22 Mar 2011</text>
<line x1="261.5" y1="372" x2="261.5" y2="377" stroke="#fff" stroke-width="1"/>
<text x="261" y="384.5" font-size="9.4" fill="#fff" stroke="#fff" stroke-width=".2" >22 Mar 05:02</text>
<line x1="325.5" y1="372" x2="325.5" y2="377" stroke="#fff" stroke-width="1"/>
<text x="325" y="384.5" font-size="9.4" fill="#fff" stroke="#fff" stroke-width=".2" >22 Mar 05:10</text>
<line x1="389.5" y1="372" x2="389.5" y2="377" stroke="#fff" stroke-width="1"/>
<text x="389" y="384.5" font-size="9.4" fill="#fff" stroke="#fff" stroke-width=".2" >22 Mar 05:18</text>
<line x1="453.5" y1="372" x2="453.5" y2="377" stroke="#fff" stroke-width="1"/>
<text x="453" y="384.5" font-size="9.4" fill="#fff" stroke="#fff" stroke-width=".2" >22 Mar 05:26</text>
<line x1="517.5" y1="372" x2="517.5" y2="377" stroke="#fff" stroke-width="1"/>
<text x="517" y="384.5" font-size="9.4" fill="#fff" stroke="#fff" stroke-width=".2" >22 Mar 07:03</text>
<line x1="581.5" y1="372" x2="581.5" y2="377" stroke="#fff" stroke-width="1"/>
<text x="581" y="384.5" font-size="9.4" fill="#fff" stroke="#fff" stroke-width=".2" >22 Mar 07:11</text>
<rect x="201" y="139" width="164" height="12" fill="#000"/><text x="202" y="148" font-size="9.4" fill="#fff" stroke="#fff" stroke-width=".2" >IFL2,M1&#160;&#160;3266.2 3266.2 3266.2 3266.2</text>
<rect x="202" y="299.5" width="44" height="12" fill="#000"/><text x="203" y="308.5" font-size="9.4" fill="#fff" stroke="#fff" stroke-width=".2" >AC -0.271</text>
<polygon points="647,137 657,137 652,142" fill="#a0a8b0" shape-rendering="auto"/>
<line x1="854.5" y1="137" x2="854.5" y2="372" stroke="#b4bcc4" stroke-width="1" stroke-dasharray="3 3"/>
<line x1="886.5" y1="137" x2="886.5" y2="372" stroke="#b4bcc4" stroke-width="1" stroke-dasharray="3 3"/>
<line x1="918.5" y1="137" x2="918.5" y2="372" stroke="#b4bcc4" stroke-width="1" stroke-dasharray="3 3"/>
<line x1="950.5" y1="137" x2="950.5" y2="372" stroke="#b4bcc4" stroke-width="1" stroke-dasharray="3 3"/>
<line x1="982.5" y1="137" x2="982.5" y2="372" stroke="#b4bcc4" stroke-width="1" stroke-dasharray="3 3"/>
<line x1="1014.5" y1="137" x2="1014.5" y2="372" stroke="#b4bcc4" stroke-width="1" stroke-dasharray="3 3"/>
<line x1="1046.5" y1="137" x2="1046.5" y2="372" stroke="#b4bcc4" stroke-width="1" stroke-dasharray="3 3"/>
<line x1="1078.5" y1="137" x2="1078.5" y2="372" stroke="#b4bcc4" stroke-width="1" stroke-dasharray="3 3"/>
<line x1="1110.5" y1="137" x2="1110.5" y2="372" stroke="#b4bcc4" stroke-width="1" stroke-dasharray="3 3"/>
<line x1="1142.5" y1="137" x2="1142.5" y2="372" stroke="#b4bcc4" stroke-width="1" stroke-dasharray="3 3"/>
<line x1="1174.5" y1="137" x2="1174.5" y2="372" stroke="#b4bcc4" stroke-width="1" stroke-dasharray="3 3"/>
<line x1="1206.5" y1="137" x2="1206.5" y2="372" stroke="#b4bcc4" stroke-width="1" stroke-dasharray="3 3"/>
<line x1="1238.5" y1="137" x2="1238.5" y2="372" stroke="#b4bcc4" stroke-width="1" stroke-dasharray="3 3"/>
<line x1="1270.5" y1="137" x2="1270.5" y2="372" stroke="#b4bcc4" stroke-width="1" stroke-dasharray="3 3"/>
<line x1="1302.5" y1="137" x2="1302.5" y2="372" stroke="#b4bcc4" stroke-width="1" stroke-dasharray="3 3"/>
<line x1="1334.5" y1="137" x2="1334.5" y2="372" stroke="#b4bcc4" stroke-width="1" stroke-dasharray="3 3"/>
<line x1="1366.5" y1="137" x2="1366.5" y2="372" stroke="#b4bcc4" stroke-width="1" stroke-dasharray="3 3"/>
<line x1="822" y1="146.5" x2="1391" y2="146.5" stroke="#b4bcc4" stroke-width="1" stroke-dasharray="3 3"/>
<line x1="822" y1="178.5" x2="1391" y2="178.5" stroke="#b4bcc4" stroke-width="1" stroke-dasharray="3 3"/>
<line x1="822" y1="210.5" x2="1391" y2="210.5" stroke="#b4bcc4" stroke-width="1" stroke-dasharray="3 3"/>
<line x1="822" y1="242.5" x2="1391" y2="242.5" stroke="#b4bcc4" stroke-width="1" stroke-dasharray="3 3"/>
<line x1="822" y1="274.5" x2="1391" y2="274.5" stroke="#b4bcc4" stroke-width="1" stroke-dasharray="3 3"/>
<line x1="822" y1="306.5" x2="1391" y2="306.5" stroke="#b4bcc4" stroke-width="1" stroke-dasharray="3 3"/>
<line x1="822" y1="338.5" x2="1391" y2="338.5" stroke="#b4bcc4" stroke-width="1" stroke-dasharray="3 3"/>
<line x1="822" y1="370.5" x2="1391" y2="370.5" stroke="#b4bcc4" stroke-width="1" stroke-dasharray="3 3"/>
<line x1="822" y1="251.5" x2="1391" y2="251.5" stroke="#a0a8b0" stroke-width="1"/>
<rect x="822" y="166" width="1" height="10" fill="#00ff00"/>
<rect x="821" y="171" width="1" height="1" fill="#00ff00"/>
<rect x="823" y="174" width="1" height="1" fill="#00ff00"/>
<rect x="826" y="170" width="1" height="5" fill="#00ff00"/>
<rect x="825" y="174" width="1" height="1" fill="#00ff00"/>
<rect x="827" y="171" width="1" height="1" fill="#00ff00"/>
<rect x="830" y="168" width="1" height="5" fill="#00ff00"/>
<rect x="829" y="171" width="1" height="1" fill="#00ff00"/>
<rect x="831" y="169" width="1" height="1" fill="#00ff00"/>
<rect x="834" y="164" width="1" height="6" fill="#00ff00"/>
<rect x="833" y="169" width="1" height="1" fill="#00ff00"/>
<rect x="835" y="165" width="1" height="1" fill="#00ff00"/>
<rect x="838" y="159" width="1" height="6" fill="#00ff00"/>
<rect x="837" y="164" width="1" height="1" fill="#00ff00"/>
<rect x="839" y="160" width="1" height="1" fill="#00ff00"/>
<rect x="842" y="158" width="1" height="5" fill="#00ff00"/>
<rect x="841" y="160" width="1" height="1" fill="#00ff00"/>
<rect x="843" y="160" width="1" height="1" fill="#00ff00"/>
<rect x="846" y="158" width="1" height="6" fill="#00ff00"/>
<rect x="845" y="160" width="1" height="1" fill="#00ff00"/>
<rect x="847" y="162" width="1" height="1" fill="#00ff00"/>
<rect x="850" y="163" width="1" height="1" fill="#00ff00"/>
<rect x="849" y="163" width="1" height="1" fill="#00ff00"/>
<rect x="851" y="163" width="1" height="1" fill="#00ff00"/>
<rect x="854" y="157" width="1" height="6" fill="#00ff00"/>
<rect x="853" y="162" width="1" height="1" fill="#00ff00"/>
<rect x="855" y="158" width="1" height="1" fill="#00ff00"/>
<rect x="858" y="155" width="1" height="5" fill="#00ff00"/>
<rect x="857" y="158" width="1" height="1" fill="#00ff00"/>
<rect x="859" y="156" width="1" height="1" fill="#00ff00"/>
<rect x="862" y="154" width="1" height="5" fill="#00ff00"/>
<rect x="861" y="156" width="1" height="1" fill="#00ff00"/>
<rect x="863" y="155" width="1" height="1" fill="#00ff00"/>
<rect x="866" y="152" width="1" height="5" fill="#00ff00"/>
<rect x="865" y="155" width="1" height="1" fill="#00ff00"/>
<rect x="867" y="153" width="1" height="1" fill="#00ff00"/>
<rect x="870" y="150" width="1" height="4" fill="#00ff00"/>
<rect x="869" y="153" width="1" height="1" fill="#00ff00"/>
<rect x="871" y="152" width="1" height="1" fill="#00ff00"/>
<rect x="874" y="150" width="1" height="3" fill="#00ff00"/>
<rect x="873" y="152" width="1" height="1" fill="#00ff00"/>
<rect x="875" y="152" width="1" height="1" fill="#00ff00"/>
<rect x="878" y="153" width="1" height="7" fill="#00ff00"/>
<rect x="877" y="153" width="1" height="1" fill="#00ff00"/>
<rect x="879" y="158" width="1" height="1" fill="#00ff00"/>
<rect x="882" y="159" width="1" height="19" fill="#00ff00"/>
<rect x="881" y="159" width="1" height="1" fill="#00ff00"/>
<rect x="883" y="176" width="1" height="1" fill="#00ff00"/>
<rect x="886" y="177" width="1" height="13" fill="#00ff00"/>
<rect x="885" y="177" width="1" height="1" fill="#00ff00"/>
<rect x="887" y="188" width="1" height="1" fill="#00ff00"/>
<rect x="890" y="187" width="1" height="19" fill="#00ff00"/>
<rect x="889" y="188" width="1" height="1" fill="#00ff00"/>
<rect x="891" y="188" width="1" height="1" fill="#00ff00"/>
<rect x="894" y="187" width="1" height="8" fill="#00ff00"/>
<rect x="893" y="188" width="1" height="1" fill="#00ff00"/>
<rect x="895" y="193" width="1" height="1" fill="#00ff00"/>
<rect x="898" y="192" width="1" height="8" fill="#00ff00"/>
<rect x="897" y="193" width="1" height="1" fill="#00ff00"/>
<rect x="899" y="198" width="1" height="1" fill="#00ff00"/>
<rect x="902" y="195" width="1" height="5" fill="#00ff00"/>
<rect x="901" y="198" width="1" height="1" fill="#00ff00"/>
<rect x="903" y="197" width="1" height="1" fill="#00ff00"/>
<rect x="906" y="196" width="1" height="4" fill="#00ff00"/>
<rect x="905" y="197" width="1" height="1" fill="#00ff00"/>
<rect x="907" y="196" width="1" height="1" fill="#00ff00"/>
<rect x="910" y="186" width="1" height="12" fill="#00ff00"/>
<rect x="909" y="196" width="1" height="1" fill="#00ff00"/>
<rect x="911" y="192" width="1" height="1" fill="#00ff00"/>
<rect x="914" y="186" width="1" height="13" fill="#00ff00"/>
<rect x="913" y="192" width="1" height="1" fill="#00ff00"/>
<rect x="915" y="197" width="1" height="1" fill="#00ff00"/>
<rect x="918" y="198" width="1" height="24" fill="#00ff00"/>
<rect x="917" y="198" width="1" height="1" fill="#00ff00"/>
<rect x="919" y="220" width="1" height="1" fill="#00ff00"/>
<rect x="922" y="221" width="1" height="24" fill="#00ff00"/>
<rect x="921" y="221" width="1" height="1" fill="#00ff00"/>
<rect x="923" y="233" width="1" height="1" fill="#00ff00"/>
<rect x="926" y="228" width="1" height="11" fill="#00ff00"/>
<rect x="925" y="233" width="1" height="1" fill="#00ff00"/>
<rect x="927" y="237" width="1" height="1" fill="#00ff00"/>
<rect x="930" y="235" width="1" height="14" fill="#00ff00"/>
<rect x="929" y="237" width="1" height="1" fill="#00ff00"/>
<rect x="931" y="242" width="1" height="1" fill="#00ff00"/>
<rect x="934" y="236" width="1" height="12" fill="#00ff00"/>
<rect x="933" y="242" width="1" height="1" fill="#00ff00"/>
<rect x="935" y="246" width="1" height="1" fill="#00ff00"/>
<rect x="938" y="239" width="1" height="12" fill="#00ff00"/>
<rect x="937" y="246" width="1" height="1" fill="#00ff00"/>
<rect x="939" y="249" width="1" height="1" fill="#00ff00"/>
<rect x="942" y="244" width="1" height="7" fill="#00ff00"/>
<rect x="941" y="249" width="1" height="1" fill="#00ff00"/>
<rect x="943" y="249" width="1" height="1" fill="#00ff00"/>
<rect x="946" y="245" width="1" height="19" fill="#00ff00"/>
<rect x="945" y="249" width="1" height="1" fill="#00ff00"/>
<rect x="947" y="262" width="1" height="1" fill="#00ff00"/>
<rect x="950" y="259" width="1" height="19" fill="#00ff00"/>
<rect x="949" y="262" width="1" height="1" fill="#00ff00"/>
<rect x="951" y="276" width="1" height="1" fill="#00ff00"/>
<rect x="954" y="274" width="1" height="14" fill="#00ff00"/>
<rect x="953" y="276" width="1" height="1" fill="#00ff00"/>
<rect x="955" y="275" width="1" height="1" fill="#00ff00"/>
<rect x="958" y="275" width="1" height="7" fill="#00ff00"/>
<rect x="957" y="275" width="1" height="1" fill="#00ff00"/>
<rect x="959" y="278" width="1" height="1" fill="#00ff00"/>
<rect x="962" y="278" width="1" height="1" fill="#00ff00"/>
<rect x="961" y="278" width="1" height="1" fill="#00ff00"/>
<rect x="963" y="278" width="1" height="1" fill="#00ff00"/>
<rect x="966" y="278" width="1" height="1" fill="#00ff00"/>
<rect x="965" y="278" width="1" height="1" fill="#00ff00"/>
<rect x="967" y="278" width="1" height="1" fill="#00ff00"/>
<rect x="970" y="341" width="1" height="1" fill="#00ff00"/>
<rect x="969" y="341" width="1" height="1" fill="#00ff00"/>
<rect x="971" y="341" width="1" height="1" fill="#00ff00"/>
<rect x="974" y="337" width="1" height="7" fill="#00ff00"/>
<rect x="973" y="341" width="1" height="1" fill="#00ff00"/>
<rect x="975" y="338" width="1" height="1" fill="#00ff00"/>
<rect x="978" y="335" width="1" height="9" fill="#00ff00"/>
<rect x="977" y="338" width="1" height="1" fill="#00ff00"/>
<rect x="979" y="342" width="1" height="1" fill="#00ff00"/>
<rect x="982" y="337" width="1" height="9" fill="#00ff00"/>
<rect x="981" y="342" width="1" height="1" fill="#00ff00"/>
<rect x="983" y="338" width="1" height="1" fill="#00ff00"/>
<rect x="986" y="337" width="1" height="7" fill="#00ff00"/>
<rect x="985" y="338" width="1" height="1" fill="#00ff00"/>
<rect x="987" y="338" width="1" height="1" fill="#00ff00"/>
<rect x="990" y="335" width="1" height="6" fill="#00ff00"/>
<rect x="989" y="338" width="1" height="1" fill="#00ff00"/>
<rect x="991" y="336" width="1" height="1" fill="#00ff00"/>
<rect x="994" y="333" width="1" height="5" fill="#00ff00"/>
<rect x="993" y="336" width="1" height="1" fill="#00ff00"/>
<rect x="995" y="336" width="1" height="1" fill="#00ff00"/>
<rect x="998" y="335" width="1" height="6" fill="#00ff00"/>
<rect x="997" y="336" width="1" height="1" fill="#00ff00"/>
<rect x="999" y="339" width="1" height="1" fill="#00ff00"/>
<rect x="1002" y="337" width="1" height="6" fill="#00ff00"/>
<rect x="1001" y="339" width="1" height="1" fill="#00ff00"/>
<rect x="1003" y="338" width="1" height="1" fill="#00ff00"/>
<rect x="1006" y="334" width="1" height="6" fill="#00ff00"/>
<rect x="1005" y="338" width="1" height="1" fill="#00ff00"/>
<rect x="1007" y="335" width="1" height="1" fill="#00ff00"/>
<rect x="1010" y="325" width="1" height="8" fill="#00ff00"/>
<rect x="1009" y="332" width="1" height="1" fill="#00ff00"/>
<rect x="1011" y="331" width="1" height="1" fill="#00ff00"/>
<rect x="1014" y="330" width="1" height="7" fill="#00ff00"/>
<rect x="1013" y="331" width="1" height="1" fill="#00ff00"/>
<rect x="1015" y="335" width="1" height="1" fill="#00ff00"/>
<rect x="1018" y="335" width="1" height="6" fill="#00ff00"/>
<rect x="1017" y="335" width="1" height="1" fill="#00ff00"/>
<rect x="1019" y="339" width="1" height="1" fill="#00ff00"/>
<rect x="1022" y="338" width="1" height="5" fill="#00ff00"/>
<rect x="1021" y="339" width="1" height="1" fill="#00ff00"/>
<rect x="1023" y="339" width="1" height="1" fill="#00ff00"/>
<rect x="1026" y="328" width="1" height="10" fill="#00ff00"/>
<rect x="1025" y="337" width="1" height="1" fill="#00ff00"/>
<rect x="1027" y="336" width="1" height="1" fill="#00ff00"/>
<rect x="1030" y="331" width="1" height="6" fill="#00ff00"/>
<rect x="1029" y="336" width="1" height="1" fill="#00ff00"/>
<rect x="1031" y="335" width="1" height="1" fill="#00ff00"/>
<rect x="1034" y="333" width="1" height="10" fill="#00ff00"/>
<rect x="1033" y="335" width="1" height="1" fill="#00ff00"/>
<rect x="1035" y="341" width="1" height="1" fill="#00ff00"/>
<rect x="1038" y="337" width="1" height="17" fill="#00ff00"/>
<rect x="1037" y="341" width="1" height="1" fill="#00ff00"/>
<rect x="1039" y="352" width="1" height="1" fill="#00ff00"/>
<rect x="1042" y="341" width="1" height="20" fill="#00ff00"/>
<rect x="1041" y="352" width="1" height="1" fill="#00ff00"/>
<rect x="1043" y="359" width="1" height="1" fill="#00ff00"/>
<rect x="1046" y="357" width="1" height="4" fill="#00ff00"/>
<rect x="1045" y="359" width="1" height="1" fill="#00ff00"/>
<rect x="1047" y="360" width="1" height="1" fill="#00ff00"/>
<rect x="1050" y="357" width="1" height="7" fill="#00ff00"/>
<rect x="1049" y="360" width="1" height="1" fill="#00ff00"/>
<rect x="1051" y="360" width="1" height="1" fill="#00ff00"/>
<rect x="1054" y="356" width="1" height="8" fill="#00ff00"/>
<rect x="1053" y="360" width="1" height="1" fill="#00ff00"/>
<rect x="1055" y="362" width="1" height="1" fill="#00ff00"/>
<rect x="1058" y="356" width="1" height="10" fill="#00ff00"/>
<rect x="1057" y="362" width="1" height="1" fill="#00ff00"/>
<rect x="1059" y="364" width="1" height="1" fill="#00ff00"/>
<rect x="1062" y="358" width="1" height="8" fill="#00ff00"/>
<rect x="1061" y="364" width="1" height="1" fill="#00ff00"/>
<rect x="1063" y="359" width="1" height="1" fill="#00ff00"/>
<rect x="1066" y="348" width="1" height="13" fill="#00ff00"/>
<rect x="1065" y="359" width="1" height="1" fill="#00ff00"/>
<rect x="1067" y="349" width="1" height="1" fill="#00ff00"/>
<rect x="1070" y="347" width="1" height="7" fill="#00ff00"/>
<rect x="1069" y="349" width="1" height="1" fill="#00ff00"/>
<rect x="1071" y="350" width="1" height="1" fill="#00ff00"/>
<rect x="1074" y="347" width="1" height="6" fill="#00ff00"/>
<rect x="1073" y="350" width="1" height="1" fill="#00ff00"/>
<rect x="1075" y="351" width="1" height="1" fill="#00ff00"/>
<rect x="1078" y="350" width="1" height="2" fill="#00ff00"/>
<rect x="1077" y="351" width="1" height="1" fill="#00ff00"/>
<rect x="1079" y="350" width="1" height="1" fill="#00ff00"/>
<rect x="1082" y="349" width="1" height="1" fill="#00ff00"/>
<rect x="1081" y="349" width="1" height="1" fill="#00ff00"/>
<rect x="1083" y="349" width="1" height="1" fill="#00ff00"/>
<rect x="1086" y="254" width="1" height="14" fill="#00ff00"/>
<rect x="1085" y="267" width="1" height="1" fill="#00ff00"/>
<rect x="1087" y="255" width="1" height="1" fill="#00ff00"/>
<rect x="1090" y="254" width="1" height="10" fill="#00ff00"/>
<rect x="1089" y="255" width="1" height="1" fill="#00ff00"/>
<rect x="1091" y="255" width="1" height="1" fill="#00ff00"/>
<rect x="1094" y="245" width="1" height="16" fill="#00ff00"/>
<rect x="1093" y="255" width="1" height="1" fill="#00ff00"/>
<rect x="1095" y="246" width="1" height="1" fill="#00ff00"/>
<rect x="1098" y="241" width="1" height="10" fill="#00ff00"/>
<rect x="1097" y="246" width="1" height="1" fill="#00ff00"/>
<rect x="1099" y="249" width="1" height="1" fill="#00ff00"/>
<rect x="1102" y="246" width="1" height="5" fill="#00ff00"/>
<rect x="1101" y="249" width="1" height="1" fill="#00ff00"/>
<rect x="1103" y="248" width="1" height="1" fill="#00ff00"/>
<rect x="1106" y="245" width="1" height="7" fill="#00ff00"/>
<rect x="1105" y="248" width="1" height="1" fill="#00ff00"/>
<rect x="1107" y="246" width="1" height="1" fill="#00ff00"/>
<rect x="1110" y="242" width="1" height="7" fill="#00ff00"/>
<rect x="1109" y="246" width="1" height="1" fill="#00ff00"/>
<rect x="1111" y="245" width="1" height="1" fill="#00ff00"/>
<rect x="1114" y="244" width="1" height="4" fill="#00ff00"/>
<rect x="1113" y="245" width="1" height="1" fill="#00ff00"/>
<rect x="1115" y="244" width="1" height="1" fill="#00ff00"/>
<rect x="1118" y="242" width="1" height="4" fill="#00ff00"/>
<rect x="1117" y="244" width="1" height="1" fill="#00ff00"/>
<rect x="1119" y="242" width="1" height="1" fill="#00ff00"/>
<rect x="1122" y="241" width="1" height="4" fill="#00ff00"/>
<rect x="1121" y="242" width="1" height="1" fill="#00ff00"/>
<rect x="1123" y="244" width="1" height="1" fill="#00ff00"/>
<rect x="1126" y="244" width="1" height="2" fill="#00ff00"/>
<rect x="1125" y="244" width="1" height="1" fill="#00ff00"/>
<rect x="1127" y="245" width="1" height="1" fill="#00ff00"/>
<rect x="1130" y="246" width="1" height="15" fill="#00ff00"/>
<rect x="1129" y="246" width="1" height="1" fill="#00ff00"/>
<rect x="1131" y="247" width="1" height="1" fill="#00ff00"/>
<rect x="1134" y="248" width="1" height="8" fill="#00ff00"/>
<rect x="1133" y="248" width="1" height="1" fill="#00ff00"/>
<rect x="1135" y="254" width="1" height="1" fill="#00ff00"/>
<rect x="1138" y="248" width="1" height="10" fill="#00ff00"/>
<rect x="1137" y="254" width="1" height="1" fill="#00ff00"/>
<rect x="1139" y="256" width="1" height="1" fill="#00ff00"/>
<rect x="1142" y="252" width="1" height="12" fill="#00ff00"/>
<rect x="1141" y="256" width="1" height="1" fill="#00ff00"/>
<rect x="1143" y="262" width="1" height="1" fill="#00ff00"/>
<rect x="1146" y="259" width="1" height="10" fill="#00ff00"/>
<rect x="1145" y="262" width="1" height="1" fill="#00ff00"/>
<rect x="1147" y="260" width="1" height="1" fill="#00ff00"/>
<rect x="1150" y="255" width="1" height="7" fill="#00ff00"/>
<rect x="1149" y="260" width="1" height="1" fill="#00ff00"/>
<rect x="1151" y="256" width="1" height="1" fill="#00ff00"/>
<rect x="1154" y="255" width="1" height="4" fill="#00ff00"/>
<rect x="1153" y="256" width="1" height="1" fill="#00ff00"/>
<rect x="1155" y="258" width="1" height="1" fill="#00ff00"/>
<rect x="1158" y="258" width="1" height="13" fill="#00ff00"/>
<rect x="1157" y="258" width="1" height="1" fill="#00ff00"/>
<rect x="1159" y="269" width="1" height="1" fill="#00ff00"/>
<rect x="1162" y="265" width="1" height="16" fill="#00ff00"/>
<rect x="1161" y="269" width="1" height="1" fill="#00ff00"/>
<rect x="1163" y="279" width="1" height="1" fill="#00ff00"/>
<rect x="1166" y="277" width="1" height="11" fill="#00ff00"/>
<rect x="1165" y="279" width="1" height="1" fill="#00ff00"/>
<rect x="1167" y="286" width="1" height="1" fill="#00ff00"/>
<rect x="1170" y="279" width="1" height="10" fill="#00ff00"/>
<rect x="1169" y="286" width="1" height="1" fill="#00ff00"/>
<rect x="1171" y="287" width="1" height="1" fill="#00ff00"/>
<rect x="1174" y="284" width="1" height="5" fill="#00ff00"/>
<rect x="1173" y="287" width="1" height="1" fill="#00ff00"/>
<rect x="1175" y="287" width="1" height="1" fill="#00ff00"/>
<rect x="1178" y="287" width="1" height="4" fill="#00ff00"/>
<rect x="1177" y="287" width="1" height="1" fill="#00ff00"/>
<rect x="1179" y="290" width="1" height="1" fill="#00ff00"/>
<rect x="1182" y="288" width="1" height="9" fill="#00ff00"/>
<rect x="1181" y="290" width="1" height="1" fill="#00ff00"/>
<rect x="1183" y="295" width="1" height="1" fill="#00ff00"/>
<rect x="1186" y="295" width="1" height="12" fill="#00ff00"/>
<rect x="1185" y="295" width="1" height="1" fill="#00ff00"/>
<rect x="1187" y="305" width="1" height="1" fill="#00ff00"/>
<rect x="1190" y="301" width="1" height="7" fill="#00ff00"/>
<rect x="1189" y="305" width="1" height="1" fill="#00ff00"/>
<rect x="1191" y="306" width="1" height="1" fill="#00ff00"/>
<rect x="1194" y="308" width="1" height="10" fill="#00ff00"/>
<rect x="1193" y="308" width="1" height="1" fill="#00ff00"/>
<rect x="1195" y="316" width="1" height="1" fill="#00ff00"/>
<rect x="1198" y="312" width="1" height="5" fill="#00ff00"/>
<rect x="1197" y="316" width="1" height="1" fill="#00ff00"/>
<rect x="1199" y="313" width="1" height="1" fill="#00ff00"/>
<rect x="1202" y="301" width="1" height="13" fill="#00ff00"/>
<rect x="1201" y="313" width="1" height="1" fill="#00ff00"/>
<rect x="1203" y="307" width="1" height="1" fill="#00ff00"/>
<rect x="1206" y="304" width="1" height="8" fill="#00ff00"/>
<rect x="1205" y="307" width="1" height="1" fill="#00ff00"/>
<rect x="1207" y="305" width="1" height="1" fill="#00ff00"/>
<rect x="1210" y="292" width="1" height="28" fill="#00ff00"/>
<rect x="1209" y="305" width="1" height="1" fill="#00ff00"/>
<rect x="1211" y="293" width="1" height="1" fill="#00ff00"/>
<rect x="1214" y="285" width="1" height="15" fill="#00ff00"/>
<rect x="1213" y="293" width="1" height="1" fill="#00ff00"/>
<rect x="1215" y="292" width="1" height="1" fill="#00ff00"/>
<rect x="1218" y="288" width="1" height="9" fill="#00ff00"/>
<rect x="1217" y="292" width="1" height="1" fill="#00ff00"/>
<rect x="1219" y="292" width="1" height="1" fill="#00ff00"/>
<rect x="1222" y="289" width="1" height="8" fill="#00ff00"/>
<rect x="1221" y="292" width="1" height="1" fill="#00ff00"/>
<rect x="1223" y="295" width="1" height="1" fill="#00ff00"/>
<rect x="1226" y="292" width="1" height="8" fill="#00ff00"/>
<rect x="1225" y="295" width="1" height="1" fill="#00ff00"/>
<rect x="1227" y="296" width="1" height="1" fill="#00ff00"/>
<rect x="1230" y="287" width="1" height="18" fill="#00ff00"/>
<rect x="1229" y="296" width="1" height="1" fill="#00ff00"/>
<rect x="1231" y="288" width="1" height="1" fill="#00ff00"/>
<rect x="1234" y="265" width="1" height="22" fill="#00ff00"/>
<rect x="1233" y="286" width="1" height="1" fill="#00ff00"/>
<rect x="1235" y="266" width="1" height="1" fill="#00ff00"/>
<rect x="1238" y="251" width="1" height="23" fill="#00ff00"/>
<rect x="1237" y="266" width="1" height="1" fill="#00ff00"/>
<rect x="1239" y="252" width="1" height="1" fill="#00ff00"/>
<rect x="1242" y="251" width="1" height="7" fill="#00ff00"/>
<rect x="1241" y="252" width="1" height="1" fill="#00ff00"/>
<rect x="1243" y="254" width="1" height="1" fill="#00ff00"/>
<rect x="1246" y="252" width="1" height="4" fill="#00ff00"/>
<rect x="1245" y="254" width="1" height="1" fill="#00ff00"/>
<rect x="1247" y="255" width="1" height="1" fill="#00ff00"/>
<rect x="1250" y="252" width="1" height="7" fill="#00ff00"/>
<rect x="1249" y="255" width="1" height="1" fill="#00ff00"/>
<rect x="1251" y="257" width="1" height="1" fill="#00ff00"/>
<rect x="1254" y="258" width="1" height="8" fill="#00ff00"/>
<rect x="1253" y="258" width="1" height="1" fill="#00ff00"/>
<rect x="1255" y="264" width="1" height="1" fill="#00ff00"/>
<rect x="1258" y="265" width="1" height="10" fill="#00ff00"/>
<rect x="1257" y="265" width="1" height="1" fill="#00ff00"/>
<rect x="1259" y="273" width="1" height="1" fill="#00ff00"/>
<rect x="1262" y="272" width="1" height="7" fill="#00ff00"/>
<rect x="1261" y="273" width="1" height="1" fill="#00ff00"/>
<rect x="1263" y="273" width="1" height="1" fill="#00ff00"/>
<rect x="1266" y="262" width="1" height="12" fill="#00ff00"/>
<rect x="1265" y="273" width="1" height="1" fill="#00ff00"/>
<rect x="1267" y="263" width="1" height="1" fill="#00ff00"/>
<rect x="1270" y="258" width="1" height="13" fill="#00ff00"/>
<rect x="1269" y="263" width="1" height="1" fill="#00ff00"/>
<rect x="1271" y="269" width="1" height="1" fill="#00ff00"/>
<rect x="1274" y="261" width="1" height="11" fill="#00ff00"/>
<rect x="1273" y="269" width="1" height="1" fill="#00ff00"/>
<rect x="1275" y="270" width="1" height="1" fill="#00ff00"/>
<rect x="1278" y="268" width="1" height="6" fill="#00ff00"/>
<rect x="1277" y="270" width="1" height="1" fill="#00ff00"/>
<rect x="1279" y="269" width="1" height="1" fill="#00ff00"/>
<rect x="1282" y="266" width="1" height="6" fill="#00ff00"/>
<rect x="1281" y="269" width="1" height="1" fill="#00ff00"/>
<rect x="1283" y="269" width="1" height="1" fill="#00ff00"/>
<rect x="1286" y="262" width="1" height="15" fill="#00ff00"/>
<rect x="1285" y="269" width="1" height="1" fill="#00ff00"/>
<rect x="1287" y="263" width="1" height="1" fill="#00ff00"/>
<rect x="1290" y="258" width="1" height="7" fill="#00ff00"/>
<rect x="1289" y="263" width="1" height="1" fill="#00ff00"/>
<rect x="1291" y="259" width="1" height="1" fill="#00ff00"/>
<rect x="1294" y="256" width="1" height="8" fill="#00ff00"/>
<rect x="1293" y="259" width="1" height="1" fill="#00ff00"/>
<rect x="1295" y="257" width="1" height="1" fill="#00ff00"/>
<rect x="1298" y="256" width="1" height="5" fill="#00ff00"/>
<rect x="1297" y="257" width="1" height="1" fill="#00ff00"/>
<rect x="1299" y="257" width="1" height="1" fill="#00ff00"/>
<rect x="1302" y="252" width="1" height="7" fill="#00ff00"/>
<rect x="1301" y="257" width="1" height="1" fill="#00ff00"/>
<rect x="1303" y="253" width="1" height="1" fill="#00ff00"/>
<rect x="1306" y="251" width="1" height="5" fill="#00ff00"/>
<rect x="1305" y="253" width="1" height="1" fill="#00ff00"/>
<rect x="1307" y="253" width="1" height="1" fill="#00ff00"/>
<rect x="1310" y="252" width="1" height="4" fill="#00ff00"/>
<rect x="1309" y="253" width="1" height="1" fill="#00ff00"/>
<rect x="1311" y="255" width="1" height="1" fill="#00ff00"/>
<rect x="1314" y="255" width="1" height="4" fill="#00ff00"/>
<rect x="1313" y="255" width="1" height="1" fill="#00ff00"/>
<rect x="1315" y="258" width="1" height="1" fill="#00ff00"/>
<rect x="1318" y="256" width="1" height="5" fill="#00ff00"/>
<rect x="1317" y="258" width="1" height="1" fill="#00ff00"/>
<rect x="1319" y="258" width="1" height="1" fill="#00ff00"/>
<rect x="1322" y="255" width="1" height="7" fill="#00ff00"/>
<rect x="1321" y="258" width="1" height="1" fill="#00ff00"/>
<rect x="1323" y="256" width="1" height="1" fill="#00ff00"/>
<rect x="1326" y="246" width="1" height="19" fill="#00ff00"/>
<rect x="1325" y="256" width="1" height="1" fill="#00ff00"/>
<rect x="1327" y="247" width="1" height="1" fill="#00ff00"/>
<rect x="1330" y="246" width="1" height="10" fill="#00ff00"/>
<rect x="1329" y="247" width="1" height="1" fill="#00ff00"/>
<rect x="1331" y="254" width="1" height="1" fill="#00ff00"/>
<rect x="1334" y="249" width="1" height="6" fill="#00ff00"/>
<rect x="1333" y="254" width="1" height="1" fill="#00ff00"/>
<rect x="1335" y="253" width="1" height="1" fill="#00ff00"/>
<rect x="1338" y="251" width="1" height="4" fill="#00ff00"/>
<rect x="1337" y="253" width="1" height="1" fill="#00ff00"/>
<rect x="1339" y="253" width="1" height="1" fill="#00ff00"/>
<rect x="1342" y="251" width="1" height="4" fill="#00ff00"/>
<rect x="1341" y="253" width="1" height="1" fill="#00ff00"/>
<rect x="1343" y="253" width="1" height="1" fill="#00ff00"/>
<rect x="1346" y="249" width="1" height="9" fill="#00ff00"/>
<rect x="1345" y="253" width="1" height="1" fill="#00ff00"/>
<rect x="1347" y="256" width="1" height="1" fill="#00ff00"/>
<rect x="1350" y="251" width="1" height="7" fill="#00ff00"/>
<rect x="1349" y="256" width="1" height="1" fill="#00ff00"/>
<rect x="1351" y="252" width="1" height="1" fill="#00ff00"/>
<rect x="1354" y="248" width="1" height="6" fill="#00ff00"/>
<rect x="1353" y="252" width="1" height="1" fill="#00ff00"/>
<rect x="1355" y="249" width="1" height="1" fill="#00ff00"/>
<rect x="1358" y="245" width="1" height="6" fill="#00ff00"/>
<rect x="1357" y="249" width="1" height="1" fill="#00ff00"/>
<rect x="1359" y="249" width="1" height="1" fill="#00ff00"/>
<rect x="1362" y="248" width="1" height="3" fill="#00ff00"/>
<rect x="1361" y="249" width="1" height="1" fill="#00ff00"/>
<rect x="1363" y="249" width="1" height="1" fill="#00ff00"/>
<rect x="1366" y="249" width="1" height="2" fill="#00ff00"/>
<rect x="1365" y="249" width="1" height="1" fill="#00ff00"/>
<rect x="1367" y="250" width="1" height="1" fill="#00ff00"/>
<rect x="1370" y="250" width="1" height="1" fill="#00ff00"/>
<rect x="1369" y="250" width="1" height="1" fill="#00ff00"/>
<rect x="1371" y="250" width="1" height="1" fill="#00ff00"/>
<polyline fill="none" stroke="#ff0000" stroke-width="1" shape-rendering="auto" points="878.8,160.2 886.8,161.6 898.3,167.4 914.1,176 924.2,188.9 934.3,206.1 947.2,222 958.7,239.2 964.4,247.8 975.9,273.7 987.4,296.7 998.9,313.9 1011.5,328.3 1022.4,338.3 1026.4,336.9 1038.5,337.5 1046.6,341.2 1058.6,345.5 1070.7,350.7 1082.8,352.7 1089.1,345.5 1099.1,325.4 1110.6,302.4 1120.7,279.4 1131,260.7 1139.1,250.7 1155.2,252.1 1166.7,256.4 1175.3,262.8 1183.9,270.8 1189.7,277.1 1198.6,286.6 1210.1,295.2 1221.6,299.5 1230.2,299.5 1238.9,295.2 1247.5,287.5 1256.1,279.4 1264.7,275.1 1276.2,269.4 1287.7,263.6 1304.9,264.5 1316.4,261.6 1327.9,257.9 1339.4,255 1350.9,253.6 1362.4,252.1 1370.5,251.6"/>
<rect x="821.5" y="136.5" width="570" height="236" fill="none" stroke="#fff"/>
<line x1="1391" y1="146.5" x2="1395" y2="146.5" stroke="#fff" stroke-width="1"/>
<text x="1397" y="148.6" font-size="9.4" fill="#fff" stroke="#fff" stroke-width=".2" >3595.0</text>
<line x1="1391" y1="178.5" x2="1395" y2="178.5" stroke="#fff" stroke-width="1"/>
<text x="1397" y="180.6" font-size="9.4" fill="#fff" stroke="#fff" stroke-width=".2" >3519.0</text>
<line x1="1391" y1="210.5" x2="1395" y2="210.5" stroke="#fff" stroke-width="1"/>
<text x="1397" y="212.6" font-size="9.4" fill="#fff" stroke="#fff" stroke-width=".2" >3445.0</text>
<line x1="1391" y1="242.5" x2="1395" y2="242.5" stroke="#fff" stroke-width="1"/>
<text x="1397" y="244.6" font-size="9.4" fill="#fff" stroke="#fff" stroke-width=".2" >3371.0</text>
<line x1="1391" y1="274.5" x2="1395" y2="274.5" stroke="#fff" stroke-width="1"/>
<text x="1397" y="276.6" font-size="9.4" fill="#fff" stroke="#fff" stroke-width=".2" >3295.0</text>
<line x1="1391" y1="306.5" x2="1395" y2="306.5" stroke="#fff" stroke-width="1"/>
<text x="1397" y="308.6" font-size="9.4" fill="#fff" stroke="#fff" stroke-width=".2" >3221.0</text>
<line x1="1391" y1="338.5" x2="1395" y2="338.5" stroke="#fff" stroke-width="1"/>
<text x="1397" y="340.6" font-size="9.4" fill="#fff" stroke="#fff" stroke-width=".2" >3147.0</text>
<line x1="1391" y1="370.5" x2="1395" y2="370.5" stroke="#fff" stroke-width="1"/>
<text x="1397" y="372.6" font-size="9.4" fill="#fff" stroke="#fff" stroke-width=".2" >3073.0</text>
<rect x="1393" y="246" width="36" height="10" fill="#fff"/>
<text x="1397" y="253.6" font-size="9.4" fill="#000" stroke="#000" stroke-width=".2" >3350.0</text>
<line x1="821.5" y1="372" x2="821.5" y2="377" stroke="#fff" stroke-width="1"/>
<text x="821" y="384.5" font-size="9.4" fill="#fff" stroke="#fff" stroke-width=".2" >11 Nov 2010</text>
<line x1="885.5" y1="372" x2="885.5" y2="377" stroke="#fff" stroke-width="1"/>
<text x="885" y="384.5" font-size="9.4" fill="#fff" stroke="#fff" stroke-width=".2" >11 Nov 09:00</text>
<line x1="949.5" y1="372" x2="949.5" y2="377" stroke="#fff" stroke-width="1"/>
<text x="949" y="384.5" font-size="9.4" fill="#fff" stroke="#fff" stroke-width=".2" >12 Nov 08:30</text>
<line x1="1013.5" y1="372" x2="1013.5" y2="377" stroke="#fff" stroke-width="1"/>
<text x="1013" y="384.5" font-size="9.4" fill="#fff" stroke="#fff" stroke-width=".2" >19 Nov 03:30</text>
<line x1="1077.5" y1="372" x2="1077.5" y2="377" stroke="#fff" stroke-width="1"/>
<text x="1077" y="384.5" font-size="9.4" fill="#fff" stroke="#fff" stroke-width=".2" >19 Nov 08:45</text>
<line x1="1141.5" y1="372" x2="1141.5" y2="377" stroke="#fff" stroke-width="1"/>
<text x="1141" y="384.5" font-size="9.4" fill="#fff" stroke="#fff" stroke-width=".2" >22 Nov 08:15</text>
<line x1="1205.5" y1="372" x2="1205.5" y2="377" stroke="#fff" stroke-width="1"/>
<text x="1205" y="384.5" font-size="9.4" fill="#fff" stroke="#fff" stroke-width=".2" >23 Nov 07:45</text>
<line x1="1269.5" y1="372" x2="1269.5" y2="377" stroke="#fff" stroke-width="1"/>
<text x="1269" y="384.5" font-size="9.4" fill="#fff" stroke="#fff" stroke-width=".2" >24 Nov 07:15</text>
<line x1="1333.5" y1="372" x2="1333.5" y2="377" stroke="#fff" stroke-width="1"/>
<text x="1333" y="384.5" font-size="9.4" fill="#fff" stroke="#fff" stroke-width=".2" >25 Nov 05:15</text>
<rect x="825" y="139" width="176" height="12" fill="#000"/><text x="826" y="148" font-size="9.4" fill="#fff" stroke="#fff" stroke-width=".2" >IF1011,M15&#160;&#160;3352.0 3352.0 3350.0 3350.0</text>
<line x1="230.5" y1="431" x2="230.5" y2="587" stroke="#b4bcc4" stroke-width="1" stroke-dasharray="3 3"/>
<line x1="230.5" y1="590" x2="230.5" y2="666" stroke="#b4bcc4" stroke-width="1" stroke-dasharray="3 3"/>
<line x1="262.5" y1="431" x2="262.5" y2="587" stroke="#b4bcc4" stroke-width="1" stroke-dasharray="3 3"/>
<line x1="262.5" y1="590" x2="262.5" y2="666" stroke="#b4bcc4" stroke-width="1" stroke-dasharray="3 3"/>
<line x1="294.5" y1="431" x2="294.5" y2="587" stroke="#b4bcc4" stroke-width="1" stroke-dasharray="3 3"/>
<line x1="294.5" y1="590" x2="294.5" y2="666" stroke="#b4bcc4" stroke-width="1" stroke-dasharray="3 3"/>
<line x1="326.5" y1="431" x2="326.5" y2="587" stroke="#b4bcc4" stroke-width="1" stroke-dasharray="3 3"/>
<line x1="326.5" y1="590" x2="326.5" y2="666" stroke="#b4bcc4" stroke-width="1" stroke-dasharray="3 3"/>
<line x1="358.5" y1="431" x2="358.5" y2="587" stroke="#b4bcc4" stroke-width="1" stroke-dasharray="3 3"/>
<line x1="358.5" y1="590" x2="358.5" y2="666" stroke="#b4bcc4" stroke-width="1" stroke-dasharray="3 3"/>
<line x1="390.5" y1="431" x2="390.5" y2="587" stroke="#b4bcc4" stroke-width="1" stroke-dasharray="3 3"/>
<line x1="390.5" y1="590" x2="390.5" y2="666" stroke="#b4bcc4" stroke-width="1" stroke-dasharray="3 3"/>
<line x1="422.5" y1="431" x2="422.5" y2="587" stroke="#b4bcc4" stroke-width="1" stroke-dasharray="3 3"/>
<line x1="422.5" y1="590" x2="422.5" y2="666" stroke="#b4bcc4" stroke-width="1" stroke-dasharray="3 3"/>
<line x1="454.5" y1="431" x2="454.5" y2="587" stroke="#b4bcc4" stroke-width="1" stroke-dasharray="3 3"/>
<line x1="454.5" y1="590" x2="454.5" y2="666" stroke="#b4bcc4" stroke-width="1" stroke-dasharray="3 3"/>
<line x1="486.5" y1="431" x2="486.5" y2="587" stroke="#b4bcc4" stroke-width="1" stroke-dasharray="3 3"/>
<line x1="486.5" y1="590" x2="486.5" y2="666" stroke="#b4bcc4" stroke-width="1" stroke-dasharray="3 3"/>
<line x1="518.5" y1="431" x2="518.5" y2="587" stroke="#b4bcc4" stroke-width="1" stroke-dasharray="3 3"/>
<line x1="518.5" y1="590" x2="518.5" y2="666" stroke="#b4bcc4" stroke-width="1" stroke-dasharray="3 3"/>
<line x1="550.5" y1="431" x2="550.5" y2="587" stroke="#b4bcc4" stroke-width="1" stroke-dasharray="3 3"/>
<line x1="550.5" y1="590" x2="550.5" y2="666" stroke="#b4bcc4" stroke-width="1" stroke-dasharray="3 3"/>
<line x1="582.5" y1="431" x2="582.5" y2="587" stroke="#b4bcc4" stroke-width="1" stroke-dasharray="3 3"/>
<line x1="582.5" y1="590" x2="582.5" y2="666" stroke="#b4bcc4" stroke-width="1" stroke-dasharray="3 3"/>
<line x1="614.5" y1="431" x2="614.5" y2="587" stroke="#b4bcc4" stroke-width="1" stroke-dasharray="3 3"/>
<line x1="614.5" y1="590" x2="614.5" y2="666" stroke="#b4bcc4" stroke-width="1" stroke-dasharray="3 3"/>
<line x1="646.5" y1="431" x2="646.5" y2="587" stroke="#b4bcc4" stroke-width="1" stroke-dasharray="3 3"/>
<line x1="646.5" y1="590" x2="646.5" y2="666" stroke="#b4bcc4" stroke-width="1" stroke-dasharray="3 3"/>
<line x1="678.5" y1="431" x2="678.5" y2="587" stroke="#b4bcc4" stroke-width="1" stroke-dasharray="3 3"/>
<line x1="678.5" y1="590" x2="678.5" y2="666" stroke="#b4bcc4" stroke-width="1" stroke-dasharray="3 3"/>
<line x1="710.5" y1="431" x2="710.5" y2="587" stroke="#b4bcc4" stroke-width="1" stroke-dasharray="3 3"/>
<line x1="710.5" y1="590" x2="710.5" y2="666" stroke="#b4bcc4" stroke-width="1" stroke-dasharray="3 3"/>
<line x1="742.5" y1="431" x2="742.5" y2="587" stroke="#b4bcc4" stroke-width="1" stroke-dasharray="3 3"/>
<line x1="742.5" y1="590" x2="742.5" y2="666" stroke="#b4bcc4" stroke-width="1" stroke-dasharray="3 3"/>
<line x1="198" y1="457.5" x2="767" y2="457.5" stroke="#b4bcc4" stroke-width="1" stroke-dasharray="3 3"/>
<line x1="198" y1="489.5" x2="767" y2="489.5" stroke="#b4bcc4" stroke-width="1" stroke-dasharray="3 3"/>
<line x1="198" y1="521.5" x2="767" y2="521.5" stroke="#b4bcc4" stroke-width="1" stroke-dasharray="3 3"/>
<line x1="198" y1="553.5" x2="767" y2="553.5" stroke="#b4bcc4" stroke-width="1" stroke-dasharray="3 3"/>
<line x1="198" y1="585.5" x2="767" y2="585.5" stroke="#b4bcc4" stroke-width="1" stroke-dasharray="3 3"/>
<line x1="198" y1="617.5" x2="767" y2="617.5" stroke="#b4bcc4" stroke-width="1" stroke-dasharray="3 3"/>
<line x1="198" y1="496.5" x2="767" y2="496.5" stroke="#a0a8b0" stroke-width="1"/>
<rect x="198" y="439" width="1" height="16" fill="#00ff00"/>
<rect x="197" y="439" width="3" height="15" fill="#00ff00"/>
<rect x="198" y="440" width="1" height="13" fill="#fff"/>
<rect x="202" y="450" width="1" height="9" fill="#00ff00"/>
<rect x="201" y="451" width="3" height="3" fill="#00ff00"/>
<rect x="202" y="452" width="1" height="1" fill="#fff"/>
<rect x="206" y="451" width="1" height="34" fill="#00ff00"/>
<rect x="205" y="454" width="3" height="29" fill="#00ff00"/>
<rect x="206" y="455" width="1" height="27" fill="#fff"/>
<rect x="210" y="480" width="1" height="33" fill="#00ff00"/>
<rect x="209" y="481" width="3" height="23" fill="#00ff00"/>
<rect x="210" y="482" width="1" height="21" fill="#fff"/>
<rect x="214" y="498" width="1" height="16" fill="#00ff00"/>
<rect x="213" y="504" width="3" height="2" fill="#00ff00"/>
<rect x="218" y="501" width="1" height="32" fill="#00ff00"/>
<rect x="217" y="507" width="3" height="26" fill="#00ff00"/>
<rect x="218" y="508" width="1" height="24" fill="#fff"/>
<rect x="222" y="533" width="1" height="41" fill="#00ff00"/>
<rect x="221" y="533" width="3" height="40" fill="#00ff00"/>
<rect x="222" y="534" width="1" height="38" fill="#fff"/>
<rect x="226" y="545" width="1" height="30" fill="#00ff00"/>
<rect x="225" y="549" width="3" height="24" fill="#00ff00"/>
<rect x="226" y="550" width="1" height="22" fill="#000"/>
<rect x="230" y="528" width="1" height="24" fill="#00ff00"/>
<rect x="229" y="537" width="3" height="12" fill="#00ff00"/>
<rect x="230" y="538" width="1" height="10" fill="#000"/>
<rect x="234" y="536" width="1" height="1" fill="#00ff00"/>
<rect x="233" y="536" width="3" height="1" fill="#00ff00"/>
<rect x="238" y="543" width="1" height="40" fill="#00ff00"/>
<rect x="237" y="547" width="3" height="2" fill="#00ff00"/>
<rect x="242" y="533" width="1" height="17" fill="#00ff00"/>
<rect x="241" y="538" width="3" height="9" fill="#00ff00"/>
<rect x="242" y="539" width="1" height="7" fill="#000"/>
<rect x="246" y="535" width="1" height="17" fill="#00ff00"/>
<rect x="245" y="538" width="3" height="2" fill="#00ff00"/>
<rect x="250" y="538" width="1" height="18" fill="#00ff00"/>
<rect x="249" y="541" width="3" height="2" fill="#00ff00"/>
<rect x="254" y="528" width="1" height="15" fill="#00ff00"/>
<rect x="253" y="529" width="3" height="13" fill="#00ff00"/>
<rect x="254" y="530" width="1" height="11" fill="#000"/>
<rect x="258" y="516" width="1" height="16" fill="#00ff00"/>
<rect x="257" y="528" width="3" height="2" fill="#00ff00"/>
<rect x="262" y="512" width="1" height="22" fill="#00ff00"/>
<rect x="261" y="515" width="3" height="14" fill="#00ff00"/>
<rect x="262" y="516" width="1" height="12" fill="#000"/>
<rect x="266" y="497" width="1" height="19" fill="#00ff00"/>
<rect x="265" y="504" width="3" height="12" fill="#00ff00"/>
<rect x="266" y="505" width="1" height="10" fill="#000"/>
<rect x="270" y="504" width="1" height="11" fill="#00ff00"/>
<rect x="269" y="504" width="3" height="7" fill="#00ff00"/>
<rect x="270" y="505" width="1" height="5" fill="#fff"/>
<rect x="274" y="511" width="1" height="1" fill="#00ff00"/>
<rect x="273" y="511" width="3" height="1" fill="#00ff00"/>
<rect x="278" y="478" width="1" height="21" fill="#00ff00"/>
<rect x="277" y="478" width="3" height="14" fill="#00ff00"/>
<rect x="278" y="479" width="1" height="12" fill="#fff"/>
<rect x="282" y="482" width="1" height="14" fill="#00ff00"/>
<rect x="281" y="491" width="3" height="2" fill="#00ff00"/>
<rect x="286" y="490" width="1" height="10" fill="#00ff00"/>
<rect x="285" y="492" width="3" height="1" fill="#00ff00"/>
<rect x="290" y="488" width="1" height="10" fill="#00ff00"/>
<rect x="289" y="490" width="3" height="3" fill="#00ff00"/>
<rect x="290" y="491" width="1" height="1" fill="#000"/>
<rect x="294" y="489" width="1" height="8" fill="#00ff00"/>
<rect x="293" y="491" width="3" height="1" fill="#00ff00"/>
<rect x="298" y="487" width="1" height="9" fill="#00ff00"/>
<rect x="297" y="488" width="3" height="5" fill="#00ff00"/>
<rect x="298" y="489" width="1" height="3" fill="#000"/>
<rect x="302" y="478" width="1" height="11" fill="#00ff00"/>
<rect x="301" y="479" width="3" height="9" fill="#00ff00"/>
<rect x="302" y="480" width="1" height="7" fill="#000"/>
<rect x="306" y="479" width="1" height="13" fill="#00ff00"/>
<rect x="305" y="480" width="3" height="10" fill="#00ff00"/>
<rect x="306" y="481" width="1" height="8" fill="#fff"/>
<rect x="310" y="487" width="1" height="9" fill="#00ff00"/>
<rect x="309" y="490" width="3" height="2" fill="#00ff00"/>
<rect x="314" y="491" width="1" height="1" fill="#00ff00"/>
<rect x="313" y="491" width="3" height="1" fill="#00ff00"/>
<rect x="318" y="484" width="1" height="12" fill="#00ff00"/>
<rect x="317" y="485" width="3" height="6" fill="#00ff00"/>
<rect x="318" y="486" width="1" height="4" fill="#000"/>
<rect x="322" y="469" width="1" height="17" fill="#00ff00"/>
<rect x="321" y="475" width="3" height="10" fill="#00ff00"/>
<rect x="322" y="476" width="1" height="8" fill="#000"/>
<rect x="326" y="449" width="1" height="27" fill="#00ff00"/>
<rect x="325" y="461" width="3" height="14" fill="#00ff00"/>
<rect x="326" y="462" width="1" height="12" fill="#000"/>
<rect x="330" y="448" width="1" height="13" fill="#00ff00"/>
<rect x="329" y="452" width="3" height="9" fill="#00ff00"/>
<rect x="330" y="453" width="1" height="7" fill="#000"/>
<rect x="334" y="445" width="1" height="15" fill="#00ff00"/>
<rect x="333" y="450" width="3" height="2" fill="#00ff00"/>
<rect x="338" y="444" width="1" height="12" fill="#00ff00"/>
<rect x="337" y="451" width="3" height="2" fill="#00ff00"/>
<rect x="342" y="451" width="1" height="8" fill="#00ff00"/>
<rect x="341" y="453" width="3" height="1" fill="#00ff00"/>
<rect x="346" y="451" width="1" height="6" fill="#00ff00"/>
<rect x="345" y="453" width="3" height="1" fill="#00ff00"/>
<rect x="350" y="453" width="1" height="4" fill="#00ff00"/>
<rect x="349" y="454" width="3" height="2" fill="#00ff00"/>
<rect x="354" y="470" width="1" height="37" fill="#00ff00"/>
<rect x="353" y="470" width="3" height="26" fill="#00ff00"/>
<rect x="354" y="471" width="1" height="24" fill="#fff"/>
<rect x="358" y="497" width="1" height="19" fill="#00ff00"/>
<rect x="357" y="498" width="3" height="4" fill="#00ff00"/>
<rect x="358" y="499" width="1" height="2" fill="#000"/>
<rect x="362" y="485" width="1" height="18" fill="#00ff00"/>
<rect x="361" y="493" width="3" height="9" fill="#00ff00"/>
<rect x="362" y="494" width="1" height="7" fill="#000"/>
<rect x="366" y="487" width="1" height="7" fill="#00ff00"/>
<rect x="365" y="488" width="3" height="5" fill="#00ff00"/>
<rect x="366" y="489" width="1" height="3" fill="#000"/>
<rect x="370" y="476" width="1" height="14" fill="#00ff00"/>
<rect x="369" y="477" width="3" height="7" fill="#00ff00"/>
<rect x="370" y="478" width="1" height="5" fill="#fff"/>
<rect x="374" y="470" width="1" height="16" fill="#00ff00"/>
<rect x="373" y="478" width="3" height="7" fill="#00ff00"/>
<rect x="374" y="479" width="1" height="5" fill="#000"/>
<rect x="378" y="469" width="1" height="13" fill="#00ff00"/>
<rect x="377" y="479" width="3" height="2" fill="#00ff00"/>
<rect x="382" y="475" width="1" height="12" fill="#00ff00"/>
<rect x="381" y="481" width="3" height="1" fill="#00ff00"/>
<rect x="386" y="482" width="1" height="1" fill="#00ff00"/>
<rect x="385" y="482" width="3" height="1" fill="#00ff00"/>
<rect x="390" y="467" width="1" height="14" fill="#00ff00"/>
<rect x="389" y="472" width="3" height="8" fill="#00ff00"/>
<rect x="390" y="473" width="1" height="6" fill="#000"/>
<rect x="394" y="466" width="1" height="17" fill="#00ff00"/>
<rect x="393" y="472" width="3" height="10" fill="#00ff00"/>
<rect x="394" y="473" width="1" height="8" fill="#fff"/>
<rect x="398" y="473" width="1" height="19" fill="#00ff00"/>
<rect x="397" y="475" width="3" height="11" fill="#00ff00"/>
<rect x="398" y="476" width="1" height="9" fill="#000"/>
<rect x="402" y="473" width="1" height="14" fill="#00ff00"/>
<rect x="401" y="475" width="3" height="11" fill="#00ff00"/>
<rect x="402" y="476" width="1" height="9" fill="#fff"/>
<rect x="406" y="480" width="1" height="13" fill="#00ff00"/>
<rect x="405" y="485" width="3" height="7" fill="#00ff00"/>
<rect x="406" y="486" width="1" height="5" fill="#000"/>
<rect x="410" y="487" width="1" height="19" fill="#00ff00"/>
<rect x="409" y="491" width="3" height="14" fill="#00ff00"/>
<rect x="410" y="492" width="1" height="12" fill="#fff"/>
<rect x="414" y="504" width="1" height="22" fill="#00ff00"/>
<rect x="413" y="510" width="3" height="14" fill="#00ff00"/>
<rect x="414" y="511" width="1" height="12" fill="#fff"/>
<rect x="418" y="507" width="1" height="19" fill="#00ff00"/>
<rect x="417" y="514" width="3" height="8" fill="#00ff00"/>
<rect x="418" y="515" width="1" height="6" fill="#000"/>
<rect x="422" y="496" width="1" height="20" fill="#00ff00"/>
<rect x="421" y="497" width="3" height="15" fill="#00ff00"/>
<rect x="422" y="498" width="1" height="13" fill="#000"/>
<rect x="426" y="496" width="1" height="1" fill="#00ff00"/>
<rect x="425" y="496" width="3" height="1" fill="#00ff00"/>
<rect x="430" y="453" width="1" height="15" fill="#00ff00"/>
<rect x="429" y="453" width="3" height="14" fill="#00ff00"/>
<rect x="430" y="454" width="1" height="12" fill="#000"/>
<rect x="434" y="449" width="1" height="21" fill="#00ff00"/>
<rect x="433" y="453" width="3" height="17" fill="#00ff00"/>
<rect x="434" y="454" width="1" height="15" fill="#fff"/>
<rect x="438" y="462" width="1" height="9" fill="#00ff00"/>
<rect x="437" y="467" width="3" height="2" fill="#00ff00"/>
<rect x="442" y="462" width="1" height="16" fill="#00ff00"/>
<rect x="441" y="468" width="3" height="9" fill="#00ff00"/>
<rect x="442" y="469" width="1" height="7" fill="#fff"/>
<rect x="446" y="467" width="1" height="11" fill="#00ff00"/>
<rect x="445" y="473" width="3" height="4" fill="#00ff00"/>
<rect x="446" y="474" width="1" height="2" fill="#000"/>
<rect x="450" y="473" width="1" height="10" fill="#00ff00"/>
<rect x="449" y="474" width="3" height="4" fill="#00ff00"/>
<rect x="450" y="475" width="1" height="2" fill="#fff"/>
<rect x="454" y="476" width="1" height="16" fill="#00ff00"/>
<rect x="453" y="478" width="3" height="13" fill="#00ff00"/>
<rect x="454" y="479" width="1" height="11" fill="#fff"/>
<rect x="458" y="482" width="1" height="12" fill="#00ff00"/>
<rect x="457" y="483" width="3" height="8" fill="#00ff00"/>
<rect x="458" y="484" width="1" height="6" fill="#000"/>
<rect x="462" y="476" width="1" height="9" fill="#00ff00"/>
<rect x="461" y="480" width="3" height="4" fill="#00ff00"/>
<rect x="462" y="481" width="1" height="2" fill="#000"/>
<rect x="466" y="475" width="1" height="11" fill="#00ff00"/>
<rect x="465" y="476" width="3" height="7" fill="#00ff00"/>
<rect x="466" y="477" width="1" height="5" fill="#fff"/>
<rect x="470" y="486" width="1" height="10" fill="#00ff00"/>
<rect x="469" y="488" width="3" height="2" fill="#00ff00"/>
<rect x="474" y="477" width="1" height="8" fill="#00ff00"/>
<rect x="473" y="478" width="3" height="6" fill="#00ff00"/>
<rect x="474" y="479" width="1" height="4" fill="#000"/>
<rect x="478" y="470" width="1" height="8" fill="#00ff00"/>
<rect x="477" y="471" width="3" height="2" fill="#00ff00"/>
<rect x="482" y="477" width="1" height="12" fill="#00ff00"/>
<rect x="481" y="478" width="3" height="7" fill="#00ff00"/>
<rect x="482" y="479" width="1" height="5" fill="#fff"/>
<rect x="486" y="480" width="1" height="12" fill="#00ff00"/>
<rect x="485" y="483" width="3" height="5" fill="#00ff00"/>
<rect x="486" y="484" width="1" height="3" fill="#fff"/>
<rect x="490" y="479" width="1" height="7" fill="#00ff00"/>
<rect x="489" y="480" width="3" height="5" fill="#00ff00"/>
<rect x="490" y="481" width="1" height="3" fill="#fff"/>
<rect x="494" y="480" width="1" height="10" fill="#00ff00"/>
<rect x="493" y="481" width="3" height="5" fill="#00ff00"/>
<rect x="494" y="482" width="1" height="3" fill="#fff"/>
<rect x="498" y="483" width="1" height="6" fill="#00ff00"/>
<rect x="497" y="485" width="3" height="2" fill="#00ff00"/>
<rect x="502" y="487" width="1" height="1" fill="#00ff00"/>
<rect x="501" y="487" width="3" height="1" fill="#00ff00"/>
<rect x="506" y="451" width="1" height="9" fill="#00ff00"/>
<rect x="505" y="455" width="3" height="2" fill="#00ff00"/>
<rect x="510" y="455" width="1" height="29" fill="#00ff00"/>
<rect x="509" y="456" width="3" height="20" fill="#00ff00"/>
<rect x="510" y="457" width="1" height="18" fill="#fff"/>
<rect x="514" y="467" width="1" height="15" fill="#00ff00"/>
<rect x="513" y="469" width="3" height="7" fill="#00ff00"/>
<rect x="514" y="470" width="1" height="5" fill="#000"/>
<rect x="518" y="458" width="1" height="11" fill="#00ff00"/>
<rect x="517" y="463" width="3" height="5" fill="#00ff00"/>
<rect x="518" y="464" width="1" height="3" fill="#000"/>
<rect x="522" y="460" width="1" height="16" fill="#00ff00"/>
<rect x="521" y="463" width="3" height="10" fill="#00ff00"/>
<rect x="522" y="464" width="1" height="8" fill="#fff"/>
<rect x="526" y="470" width="1" height="37" fill="#00ff00"/>
<rect x="525" y="472" width="3" height="29" fill="#00ff00"/>
<rect x="526" y="473" width="1" height="27" fill="#fff"/>
<rect x="530" y="502" width="1" height="16" fill="#00ff00"/>
<rect x="529" y="502" width="3" height="15" fill="#00ff00"/>
<rect x="530" y="503" width="1" height="13" fill="#fff"/>
<rect x="534" y="498" width="1" height="21" fill="#00ff00"/>
<rect x="533" y="502" width="3" height="16" fill="#00ff00"/>
<rect x="534" y="503" width="1" height="14" fill="#000"/>
<rect x="538" y="492" width="1" height="14" fill="#00ff00"/>
<rect x="537" y="498" width="3" height="4" fill="#00ff00"/>
<rect x="538" y="499" width="1" height="2" fill="#000"/>
<rect x="542" y="496" width="1" height="1" fill="#00ff00"/>
<rect x="541" y="496" width="3" height="1" fill="#00ff00"/>
<rect x="546" y="497" width="1" height="12" fill="#00ff00"/>
<rect x="545" y="498" width="3" height="2" fill="#00ff00"/>
<rect x="550" y="497" width="1" height="14" fill="#00ff00"/>
<rect x="549" y="498" width="3" height="6" fill="#00ff00"/>
<rect x="550" y="499" width="1" height="4" fill="#fff"/>
<rect x="554" y="497" width="1" height="15" fill="#00ff00"/>
<rect x="553" y="499" width="3" height="6" fill="#00ff00"/>
<rect x="554" y="500" width="1" height="4" fill="#000"/>
<rect x="558" y="488" width="1" height="13" fill="#00ff00"/>
<rect x="557" y="496" width="3" height="3" fill="#00ff00"/>
<rect x="558" y="497" width="1" height="1" fill="#000"/>
<rect x="562" y="488" width="1" height="22" fill="#00ff00"/>
<rect x="561" y="496" width="3" height="12" fill="#00ff00"/>
<rect x="562" y="497" width="1" height="10" fill="#fff"/>
<rect x="566" y="504" width="1" height="21" fill="#00ff00"/>
<rect x="565" y="506" width="3" height="2" fill="#00ff00"/>
<rect x="570" y="499" width="1" height="15" fill="#00ff00"/>
<rect x="569" y="501" width="3" height="6" fill="#00ff00"/>
<rect x="570" y="502" width="1" height="4" fill="#000"/>
<rect x="574" y="498" width="1" height="8" fill="#00ff00"/>
<rect x="573" y="501" width="3" height="1" fill="#00ff00"/>
<rect x="578" y="489" width="1" height="15" fill="#00ff00"/>
<rect x="577" y="490" width="3" height="10" fill="#00ff00"/>
<rect x="578" y="491" width="1" height="8" fill="#000"/>
<rect x="582" y="491" width="1" height="1" fill="#00ff00"/>
<rect x="581" y="491" width="3" height="1" fill="#00ff00"/>
<rect x="586" y="473" width="1" height="12" fill="#00ff00"/>
<rect x="585" y="473" width="3" height="9" fill="#00ff00"/>
<rect x="586" y="474" width="1" height="7" fill="#fff"/>
<rect x="590" y="480" width="1" height="15" fill="#00ff00"/>
<rect x="589" y="480" width="3" height="12" fill="#00ff00"/>
<rect x="590" y="481" width="1" height="10" fill="#fff"/>
<rect x="594" y="490" width="1" height="24" fill="#00ff00"/>
<rect x="593" y="492" width="3" height="15" fill="#00ff00"/>
<rect x="594" y="493" width="1" height="13" fill="#fff"/>
<rect x="598" y="506" width="1" height="45" fill="#00ff00"/>
<rect x="597" y="506" width="3" height="34" fill="#00ff00"/>
<rect x="598" y="507" width="1" height="32" fill="#fff"/>
<rect x="602" y="534" width="1" height="12" fill="#00ff00"/>
<rect x="601" y="540" width="3" height="2" fill="#00ff00"/>
<rect x="606" y="494" width="1" height="56" fill="#00ff00"/>
<rect x="605" y="502" width="3" height="40" fill="#00ff00"/>
<rect x="606" y="503" width="1" height="38" fill="#000"/>
<rect x="610" y="496" width="1" height="11" fill="#00ff00"/>
<rect x="609" y="498" width="3" height="6" fill="#00ff00"/>
<rect x="610" y="499" width="1" height="4" fill="#000"/>
<rect x="614" y="492" width="1" height="14" fill="#00ff00"/>
<rect x="613" y="498" width="3" height="6" fill="#00ff00"/>
<rect x="614" y="499" width="1" height="4" fill="#fff"/>
<rect x="618" y="476" width="1" height="20" fill="#00ff00"/>
<rect x="617" y="480" width="3" height="10" fill="#00ff00"/>
<rect x="618" y="481" width="1" height="8" fill="#fff"/>
<rect x="622" y="490" width="1" height="1" fill="#00ff00"/>
<rect x="621" y="490" width="3" height="1" fill="#00ff00"/>
<rect x="626" y="489" width="1" height="9" fill="#00ff00"/>
<rect x="625" y="490" width="3" height="8" fill="#00ff00"/>
<rect x="626" y="491" width="1" height="6" fill="#fff"/>
<rect x="630" y="496" width="1" height="3" fill="#00ff00"/>
<rect x="629" y="497" width="3" height="1" fill="#00ff00"/>
<rect x="206" y="618" width="1" height="2" fill="#c0c0c0"/>
<rect x="210" y="618" width="1" height="9" fill="#c0c0c0"/>
<rect x="214" y="618" width="1" height="14" fill="#c0c0c0"/>
<rect x="218" y="618" width="1" height="22" fill="#c0c0c0"/>
<rect x="222" y="618" width="1" height="33" fill="#c0c0c0"/>
<rect x="226" y="618" width="1" height="38" fill="#c0c0c0"/>
<rect x="230" y="618" width="1" height="42" fill="#c0c0c0"/>
<rect x="234" y="618" width="1" height="41" fill="#c0c0c0"/>
<rect x="238" y="618" width="1" height="43" fill="#c0c0c0"/>
<rect x="242" y="618" width="1" height="43" fill="#c0c0c0"/>
<rect x="246" y="618" width="1" height="42" fill="#c0c0c0"/>
<rect x="250" y="618" width="1" height="42" fill="#c0c0c0"/>
<rect x="254" y="618" width="1" height="40" fill="#c0c0c0"/>
<rect x="258" y="618" width="1" height="37" fill="#c0c0c0"/>
<rect x="262" y="618" width="1" height="32" fill="#c0c0c0"/>
<rect x="266" y="618" width="1" height="26" fill="#c0c0c0"/>
<rect x="270" y="618" width="1" height="22" fill="#c0c0c0"/>
<rect x="274" y="618" width="1" height="18" fill="#c0c0c0"/>
<rect x="278" y="618" width="1" height="13" fill="#c0c0c0"/>
<rect x="282" y="618" width="1" height="9" fill="#c0c0c0"/>
<rect x="286" y="618" width="1" height="6" fill="#c0c0c0"/>
<rect x="290" y="618" width="1" height="2" fill="#c0c0c0"/>
<rect x="302" y="614" width="1" height="4" fill="#c0c0c0"/>
<rect x="306" y="613" width="1" height="5" fill="#c0c0c0"/>
<rect x="310" y="614" width="1" height="4" fill="#c0c0c0"/>
<rect x="314" y="613" width="1" height="5" fill="#c0c0c0"/>
<rect x="318" y="611" width="1" height="7" fill="#c0c0c0"/>
<rect x="322" y="608" width="1" height="10" fill="#c0c0c0"/>
<rect x="326" y="605" width="1" height="13" fill="#c0c0c0"/>
<rect x="330" y="601" width="1" height="17" fill="#c0c0c0"/>
<rect x="334" y="598" width="1" height="20" fill="#c0c0c0"/>
<rect x="338" y="596" width="1" height="22" fill="#c0c0c0"/>
<rect x="342" y="596" width="1" height="22" fill="#c0c0c0"/>
<rect x="346" y="595" width="1" height="23" fill="#c0c0c0"/>
<rect x="350" y="595" width="1" height="23" fill="#c0c0c0"/>
<rect x="354" y="600" width="1" height="18" fill="#c0c0c0"/>
<rect x="358" y="605" width="1" height="13" fill="#c0c0c0"/>
<rect x="362" y="609" width="1" height="9" fill="#c0c0c0"/>
<rect x="366" y="612" width="1" height="6" fill="#c0c0c0"/>
<rect x="370" y="613" width="1" height="5" fill="#c0c0c0"/>
<rect x="374" y="613" width="1" height="5" fill="#c0c0c0"/>
<rect x="378" y="614" width="1" height="4" fill="#c0c0c0"/>
<rect x="382" y="614" width="1" height="4" fill="#c0c0c0"/>
<rect x="386" y="614" width="1" height="4" fill="#c0c0c0"/>
<rect x="390" y="611" width="1" height="7" fill="#c0c0c0"/>
<rect x="394" y="614" width="1" height="4" fill="#c0c0c0"/>
<rect x="398" y="613" width="1" height="5" fill="#c0c0c0"/>
<rect x="402" y="614" width="1" height="4" fill="#c0c0c0"/>
<rect x="406" y="615" width="1" height="3" fill="#c0c0c0"/>
<rect x="410" y="618" width="1" height="6" fill="#c0c0c0"/>
<rect x="414" y="618" width="1" height="7" fill="#c0c0c0"/>
<rect x="418" y="618" width="1" height="8" fill="#c0c0c0"/>
<rect x="422" y="618" width="1" height="8" fill="#c0c0c0"/>
<rect x="426" y="618" width="1" height="7" fill="#c0c0c0"/>
<rect x="430" y="618" width="1" height="3" fill="#c0c0c0"/>
<rect x="438" y="615" width="1" height="3" fill="#c0c0c0"/>
<rect x="442" y="614" width="1" height="4" fill="#c0c0c0"/>
<rect x="446" y="613" width="1" height="5" fill="#c0c0c0"/>
<rect x="450" y="614" width="1" height="4" fill="#c0c0c0"/>
<rect x="454" y="615" width="1" height="3" fill="#c0c0c0"/>
<rect x="458" y="616" width="1" height="2" fill="#c0c0c0"/>
<rect x="462" y="616" width="1" height="2" fill="#c0c0c0"/>
<rect x="466" y="616" width="1" height="2" fill="#c0c0c0"/>
<rect x="470" y="616" width="1" height="2" fill="#c0c0c0"/>
<rect x="478" y="616" width="1" height="2" fill="#c0c0c0"/>
<rect x="482" y="616" width="1" height="2" fill="#c0c0c0"/>
<rect x="506" y="615" width="1" height="3" fill="#c0c0c0"/>
<rect x="510" y="614" width="1" height="4" fill="#c0c0c0"/>
<rect x="514" y="612" width="1" height="6" fill="#c0c0c0"/>
<rect x="518" y="610" width="1" height="8" fill="#c0c0c0"/>
<rect x="522" y="611" width="1" height="7" fill="#c0c0c0"/>
<rect x="526" y="616" width="1" height="2" fill="#c0c0c0"/>
<rect x="530" y="618" width="1" height="1" fill="#c0c0c0"/>
<rect x="534" y="618" width="1" height="3" fill="#c0c0c0"/>
<rect x="538" y="618" width="1" height="5" fill="#c0c0c0"/>
<rect x="542" y="618" width="1" height="6" fill="#c0c0c0"/>
<rect x="546" y="618" width="1" height="6" fill="#c0c0c0"/>
<rect x="550" y="618" width="1" height="7" fill="#c0c0c0"/>
<rect x="554" y="618" width="1" height="6" fill="#c0c0c0"/>
<rect x="558" y="618" width="1" height="7" fill="#c0c0c0"/>
<rect x="562" y="618" width="1" height="8" fill="#c0c0c0"/>
<rect x="566" y="618" width="1" height="9" fill="#c0c0c0"/>
<rect x="570" y="618" width="1" height="8" fill="#c0c0c0"/>
<rect x="574" y="618" width="1" height="8" fill="#c0c0c0"/>
<rect x="578" y="618" width="1" height="7" fill="#c0c0c0"/>
<rect x="582" y="618" width="1" height="6" fill="#c0c0c0"/>
<rect x="586" y="618" width="1" height="5" fill="#c0c0c0"/>
<rect x="590" y="618" width="1" height="4" fill="#c0c0c0"/>
<rect x="594" y="618" width="1" height="5" fill="#c0c0c0"/>
<rect x="598" y="618" width="1" height="9" fill="#c0c0c0"/>
<rect x="602" y="618" width="1" height="13" fill="#c0c0c0"/>
<rect x="606" y="618" width="1" height="11" fill="#c0c0c0"/>
<rect x="610" y="618" width="1" height="9" fill="#c0c0c0"/>
<rect x="614" y="618" width="1" height="9" fill="#c0c0c0"/>
<rect x="618" y="618" width="1" height="6" fill="#c0c0c0"/>
<rect x="622" y="618" width="1" height="3" fill="#c0c0c0"/>
<rect x="626" y="618" width="1" height="1" fill="#c0c0c0"/>
<rect x="630" y="618" width="1" height="1" fill="#c0c0c0"/>
<polyline fill="none" stroke="#ff0000" stroke-width="1" stroke-dasharray="3 3" shape-rendering="auto" points="234.3,641.5 242.3,650.7 250.3,657.3 258.3,659.3 263.3,659 270.3,654.8 278.3,649.8 286.3,641.5 294.3,633.2 302.3,625.7 310.3,619.8 318.3,615.7 326.3,611.5 334.3,607 342.3,603.2 350.3,600.3 358.3,599.3 366.3,600.3 374.3,603.7 382.3,608.2 390.3,611.5 398.3,613.2 406.3,613.7 410,614.5 416.7,617.3 426.7,619.8 435,621.5 443.3,621.5 451.7,618.2 460,615.7 468.3,614.5 476.7,614.5 486.7,615.2 496.7,615.7 506.7,615.2 516.7,614.8 526.7,614.3 536.7,615.3 546.7,618.2 556.7,622.7 563.3,625.3 573.3,626.5 583.3,626.5 593.3,624.3 600,624.8 606.7,625.7 616.7,626.5 626.7,626 630,625.3"/>
<rect x="197.5" y="430.5" width="570" height="157" fill="none" stroke="#fff"/>
<rect x="197.5" y="589.5" width="570" height="77" fill="none" stroke="#fff"/>
<line x1="767" y1="457.5" x2="771" y2="457.5" stroke="#fff" stroke-width="1"/>
<text x="773" y="459.6" font-size="9.4" fill="#fff" stroke="#fff" stroke-width=".2" >3256.5</text>
<line x1="767" y1="489.5" x2="771" y2="489.5" stroke="#fff" stroke-width="1"/>
<text x="773" y="491.6" font-size="9.4" fill="#fff" stroke="#fff" stroke-width=".2" >3230.5</text>
<line x1="767" y1="521.5" x2="771" y2="521.5" stroke="#fff" stroke-width="1"/>
<text x="773" y="523.6" font-size="9.4" fill="#fff" stroke="#fff" stroke-width=".2" >3204.5</text>
<line x1="767" y1="553.5" x2="771" y2="553.5" stroke="#fff" stroke-width="1"/>
<text x="773" y="555.6" font-size="9.4" fill="#fff" stroke="#fff" stroke-width=".2" >3179.0</text>
<line x1="767" y1="585.5" x2="771" y2="585.5" stroke="#fff" stroke-width="1"/>
<text x="773" y="587.6" font-size="9.4" fill="#fff" stroke="#fff" stroke-width=".2" >3153.0</text>
<rect x="769" y="491" width="36" height="10" fill="#fff"/>
<text x="773" y="498.6" font-size="9.4" fill="#000" stroke="#000" stroke-width=".2" >3225.0</text>

<text x="771" y="599.6" font-size="9.4" fill="#fff" stroke="#fff" stroke-width=".2" >11.72</text>
<line x1="767" y1="617.5" x2="771" y2="617.5" stroke="#fff" stroke-width="1"/>
<text x="771" y="619.6" font-size="9.4" fill="#fff" stroke="#fff" stroke-width=".2" >0.00</text>

<text x="771" y="662.6" font-size="9.4" fill="#fff" stroke="#fff" stroke-width=".2" >-21.81</text>
<line x1="197.5" y1="666" x2="197.5" y2="671" stroke="#fff" stroke-width="1"/>
<text x="197" y="678.5" font-size="9.4" fill="#fff" stroke="#fff" stroke-width=".2" >15 Mar 2011</text>
<line x1="261.5" y1="666" x2="261.5" y2="671" stroke="#fff" stroke-width="1"/>
<text x="261" y="678.5" font-size="9.4" fill="#fff" stroke="#fff" stroke-width=".2" >15 Mar 08:30</text>
<line x1="325.5" y1="666" x2="325.5" y2="671" stroke="#fff" stroke-width="1"/>
<text x="325" y="678.5" font-size="9.4" fill="#fff" stroke="#fff" stroke-width=".2" >16 Mar 07:30</text>
<line x1="389.5" y1="666" x2="389.5" y2="671" stroke="#fff" stroke-width="1"/>
<text x="389" y="678.5" font-size="9.4" fill="#fff" stroke="#fff" stroke-width=".2" >17 Mar 07:00</text>
<line x1="453.5" y1="666" x2="453.5" y2="671" stroke="#fff" stroke-width="1"/>
<text x="453" y="678.5" font-size="9.4" fill="#fff" stroke="#fff" stroke-width=".2" >18 Mar 04:45</text>
<line x1="517.5" y1="666" x2="517.5" y2="671" stroke="#fff" stroke-width="1"/>
<text x="517" y="678.5" font-size="9.4" fill="#fff" stroke="#fff" stroke-width=".2" >21 Mar 04:00</text>
<line x1="581.5" y1="666" x2="581.5" y2="671" stroke="#fff" stroke-width="1"/>
<text x="581" y="678.5" font-size="9.4" fill="#fff" stroke="#fff" stroke-width=".2" >21 Mar 09:15</text>
<rect x="201" y="433" width="180" height="12" fill="#000"/><text x="202" y="442" font-size="9.4" fill="#fff" stroke="#fff" stroke-width=".2" >IF1004,M15&#160;&#160;3224.2 3225.4 3223.2 3225.0</text>
<rect x="201" y="593.5" width="116" height="12" fill="#000"/><text x="202" y="602.5" font-size="9.4" fill="#fff" stroke="#fff" stroke-width=".2" >MACD(12,26,9) -1.21 -3.91</text>
<line x1="854.5" y1="431" x2="854.5" y2="587" stroke="#b4bcc4" stroke-width="1" stroke-dasharray="3 3"/>
<line x1="854.5" y1="590" x2="854.5" y2="666" stroke="#b4bcc4" stroke-width="1" stroke-dasharray="3 3"/>
<line x1="886.5" y1="431" x2="886.5" y2="587" stroke="#b4bcc4" stroke-width="1" stroke-dasharray="3 3"/>
<line x1="886.5" y1="590" x2="886.5" y2="666" stroke="#b4bcc4" stroke-width="1" stroke-dasharray="3 3"/>
<line x1="918.5" y1="431" x2="918.5" y2="587" stroke="#b4bcc4" stroke-width="1" stroke-dasharray="3 3"/>
<line x1="918.5" y1="590" x2="918.5" y2="666" stroke="#b4bcc4" stroke-width="1" stroke-dasharray="3 3"/>
<line x1="950.5" y1="431" x2="950.5" y2="587" stroke="#b4bcc4" stroke-width="1" stroke-dasharray="3 3"/>
<line x1="950.5" y1="590" x2="950.5" y2="666" stroke="#b4bcc4" stroke-width="1" stroke-dasharray="3 3"/>
<line x1="982.5" y1="431" x2="982.5" y2="587" stroke="#b4bcc4" stroke-width="1" stroke-dasharray="3 3"/>
<line x1="982.5" y1="590" x2="982.5" y2="666" stroke="#b4bcc4" stroke-width="1" stroke-dasharray="3 3"/>
<line x1="1014.5" y1="431" x2="1014.5" y2="587" stroke="#b4bcc4" stroke-width="1" stroke-dasharray="3 3"/>
<line x1="1014.5" y1="590" x2="1014.5" y2="666" stroke="#b4bcc4" stroke-width="1" stroke-dasharray="3 3"/>
<line x1="1046.5" y1="431" x2="1046.5" y2="587" stroke="#b4bcc4" stroke-width="1" stroke-dasharray="3 3"/>
<line x1="1046.5" y1="590" x2="1046.5" y2="666" stroke="#b4bcc4" stroke-width="1" stroke-dasharray="3 3"/>
<line x1="1078.5" y1="431" x2="1078.5" y2="587" stroke="#b4bcc4" stroke-width="1" stroke-dasharray="3 3"/>
<line x1="1078.5" y1="590" x2="1078.5" y2="666" stroke="#b4bcc4" stroke-width="1" stroke-dasharray="3 3"/>
<line x1="1110.5" y1="431" x2="1110.5" y2="587" stroke="#b4bcc4" stroke-width="1" stroke-dasharray="3 3"/>
<line x1="1110.5" y1="590" x2="1110.5" y2="666" stroke="#b4bcc4" stroke-width="1" stroke-dasharray="3 3"/>
<line x1="1142.5" y1="431" x2="1142.5" y2="587" stroke="#b4bcc4" stroke-width="1" stroke-dasharray="3 3"/>
<line x1="1142.5" y1="590" x2="1142.5" y2="666" stroke="#b4bcc4" stroke-width="1" stroke-dasharray="3 3"/>
<line x1="1174.5" y1="431" x2="1174.5" y2="587" stroke="#b4bcc4" stroke-width="1" stroke-dasharray="3 3"/>
<line x1="1174.5" y1="590" x2="1174.5" y2="666" stroke="#b4bcc4" stroke-width="1" stroke-dasharray="3 3"/>
<line x1="1206.5" y1="431" x2="1206.5" y2="587" stroke="#b4bcc4" stroke-width="1" stroke-dasharray="3 3"/>
<line x1="1206.5" y1="590" x2="1206.5" y2="666" stroke="#b4bcc4" stroke-width="1" stroke-dasharray="3 3"/>
<line x1="1238.5" y1="431" x2="1238.5" y2="587" stroke="#b4bcc4" stroke-width="1" stroke-dasharray="3 3"/>
<line x1="1238.5" y1="590" x2="1238.5" y2="666" stroke="#b4bcc4" stroke-width="1" stroke-dasharray="3 3"/>
<line x1="1270.5" y1="431" x2="1270.5" y2="587" stroke="#b4bcc4" stroke-width="1" stroke-dasharray="3 3"/>
<line x1="1270.5" y1="590" x2="1270.5" y2="666" stroke="#b4bcc4" stroke-width="1" stroke-dasharray="3 3"/>
<line x1="1302.5" y1="431" x2="1302.5" y2="587" stroke="#b4bcc4" stroke-width="1" stroke-dasharray="3 3"/>
<line x1="1302.5" y1="590" x2="1302.5" y2="666" stroke="#b4bcc4" stroke-width="1" stroke-dasharray="3 3"/>
<line x1="1334.5" y1="431" x2="1334.5" y2="587" stroke="#b4bcc4" stroke-width="1" stroke-dasharray="3 3"/>
<line x1="1334.5" y1="590" x2="1334.5" y2="666" stroke="#b4bcc4" stroke-width="1" stroke-dasharray="3 3"/>
<line x1="1366.5" y1="431" x2="1366.5" y2="587" stroke="#b4bcc4" stroke-width="1" stroke-dasharray="3 3"/>
<line x1="1366.5" y1="590" x2="1366.5" y2="666" stroke="#b4bcc4" stroke-width="1" stroke-dasharray="3 3"/>
<line x1="822" y1="457.5" x2="1391" y2="457.5" stroke="#b4bcc4" stroke-width="1" stroke-dasharray="3 3"/>
<line x1="822" y1="489.5" x2="1391" y2="489.5" stroke="#b4bcc4" stroke-width="1" stroke-dasharray="3 3"/>
<line x1="822" y1="521.5" x2="1391" y2="521.5" stroke="#b4bcc4" stroke-width="1" stroke-dasharray="3 3"/>
<line x1="822" y1="553.5" x2="1391" y2="553.5" stroke="#b4bcc4" stroke-width="1" stroke-dasharray="3 3"/>
<line x1="822" y1="585.5" x2="1391" y2="585.5" stroke="#b4bcc4" stroke-width="1" stroke-dasharray="3 3"/>
<line x1="822" y1="632.5" x2="1391" y2="632.5" stroke="#b4bcc4" stroke-width="1" stroke-dasharray="3 3"/>
<line x1="822" y1="643.5" x2="1391" y2="643.5" stroke="#b4bcc4" stroke-width="1" stroke-dasharray="3 3"/>
<line x1="822" y1="653.5" x2="1391" y2="653.5" stroke="#b4bcc4" stroke-width="1" stroke-dasharray="3 3"/>
<line x1="999" y1="441.5" x2="1391" y2="441.5" stroke="#a0a8b0" stroke-width="1"/>
<rect x="822" y="545" width="1" height="5" fill="#00ff00"/>
<rect x="820" y="547" width="5" height="1" fill="#00ff00"/>
<rect x="830" y="546" width="1" height="4" fill="#00ff00"/>
<rect x="828" y="547" width="5" height="2" fill="#00ff00"/>
<rect x="838" y="547" width="1" height="4" fill="#00ff00"/>
<rect x="836" y="548" width="5" height="1" fill="#00ff00"/>
<rect x="846" y="548" width="1" height="10" fill="#00ff00"/>
<rect x="844" y="549" width="5" height="9" fill="#00ff00"/>
<rect x="845" y="550" width="3" height="7" fill="#fff"/>
<rect x="854" y="554" width="1" height="5" fill="#00ff00"/>
<rect x="852" y="557" width="5" height="2" fill="#00ff00"/>
<rect x="862" y="556" width="1" height="4" fill="#00ff00"/>
<rect x="860" y="556" width="5" height="3" fill="#00ff00"/>
<rect x="861" y="557" width="3" height="1" fill="#fff"/>
<rect x="870" y="558" width="1" height="14" fill="#00ff00"/>
<rect x="868" y="558" width="5" height="13" fill="#00ff00"/>
<rect x="869" y="559" width="3" height="11" fill="#fff"/>
<rect x="878" y="567" width="1" height="6" fill="#00ff00"/>
<rect x="876" y="570" width="5" height="1" fill="#00ff00"/>
<rect x="886" y="569" width="1" height="10" fill="#00ff00"/>
<rect x="884" y="570" width="5" height="8" fill="#00ff00"/>
<rect x="885" y="571" width="3" height="6" fill="#fff"/>
<rect x="894" y="574" width="1" height="9" fill="#00ff00"/>
<rect x="892" y="575" width="5" height="4" fill="#00ff00"/>
<rect x="893" y="576" width="3" height="2" fill="#000"/>
<rect x="902" y="574" width="1" height="2" fill="#00ff00"/>
<rect x="900" y="574" width="5" height="2" fill="#00ff00"/>
<rect x="910" y="571" width="1" height="5" fill="#00ff00"/>
<rect x="908" y="572" width="5" height="2" fill="#00ff00"/>
<rect x="918" y="571" width="1" height="5" fill="#00ff00"/>
<rect x="916" y="573" width="5" height="2" fill="#00ff00"/>
<rect x="926" y="570" width="1" height="6" fill="#00ff00"/>
<rect x="924" y="571" width="5" height="4" fill="#00ff00"/>
<rect x="925" y="572" width="3" height="2" fill="#000"/>
<rect x="934" y="571" width="1" height="4" fill="#00ff00"/>
<rect x="932" y="571" width="5" height="3" fill="#00ff00"/>
<rect x="933" y="572" width="3" height="1" fill="#fff"/>
<rect x="942" y="572" width="1" height="5" fill="#00ff00"/>
<rect x="940" y="573" width="5" height="1" fill="#00ff00"/>
<rect x="950" y="573" width="1" height="3" fill="#00ff00"/>
<rect x="948" y="573" width="5" height="1" fill="#00ff00"/>
<rect x="958" y="572" width="1" height="4" fill="#00ff00"/>
<rect x="956" y="572" width="5" height="2" fill="#00ff00"/>
<rect x="966" y="573" width="1" height="7" fill="#00ff00"/>
<rect x="964" y="574" width="5" height="4" fill="#00ff00"/>
<rect x="965" y="575" width="3" height="2" fill="#fff"/>
<rect x="974" y="569" width="1" height="13" fill="#00ff00"/>
<rect x="972" y="571" width="5" height="7" fill="#00ff00"/>
<rect x="973" y="572" width="3" height="5" fill="#000"/>
<rect x="982" y="570" width="1" height="6" fill="#00ff00"/>
<rect x="980" y="571" width="5" height="2" fill="#00ff00"/>
<rect x="990" y="571" width="1" height="6" fill="#00ff00"/>
<rect x="988" y="572" width="5" height="4" fill="#00ff00"/>
<rect x="989" y="573" width="3" height="2" fill="#fff"/>
<rect x="998" y="575" width="1" height="1" fill="#00ff00"/>
<rect x="996" y="575" width="5" height="1" fill="#00ff00"/>
<rect x="1006" y="571" width="1" height="4" fill="#00ff00"/>
<rect x="1004" y="572" width="5" height="1" fill="#00ff00"/>
<rect x="1014" y="572" width="1" height="5" fill="#00ff00"/>
<rect x="1012" y="573" width="5" height="1" fill="#00ff00"/>
<rect x="1022" y="573" width="1" height="6" fill="#00ff00"/>
<rect x="1020" y="574" width="5" height="2" fill="#00ff00"/>
<rect x="1030" y="574" width="1" height="4" fill="#00ff00"/>
<rect x="1028" y="575" width="5" height="1" fill="#00ff00"/>
<rect x="1038" y="573" width="1" height="4" fill="#00ff00"/>
<rect x="1036" y="574" width="5" height="1" fill="#00ff00"/>
<rect x="1046" y="574" width="1" height="2" fill="#00ff00"/>
<rect x="1044" y="574" width="5" height="1" fill="#00ff00"/>
<rect x="1054" y="533" width="1" height="10" fill="#00ff00"/>
<rect x="1052" y="535" width="5" height="7" fill="#00ff00"/>
<rect x="1053" y="536" width="3" height="5" fill="#000"/>
<rect x="1062" y="521" width="1" height="14" fill="#00ff00"/>
<rect x="1060" y="521" width="5" height="14" fill="#00ff00"/>
<rect x="1061" y="522" width="3" height="12" fill="#000"/>
<rect x="1070" y="521" width="1" height="1" fill="#00ff00"/>
<rect x="1068" y="521" width="5" height="1" fill="#00ff00"/>
<rect x="1078" y="501" width="1" height="6" fill="#00ff00"/>
<rect x="1076" y="503" width="5" height="2" fill="#00ff00"/>
<rect x="1086" y="505" width="1" height="1" fill="#00ff00"/>
<rect x="1084" y="505" width="5" height="1" fill="#00ff00"/>
<rect x="1094" y="491" width="1" height="6" fill="#00ff00"/>
<rect x="1092" y="493" width="5" height="2" fill="#00ff00"/>
<rect x="1102" y="492" width="1" height="4" fill="#00ff00"/>
<rect x="1100" y="493" width="5" height="1" fill="#00ff00"/>
<rect x="1110" y="489" width="1" height="7" fill="#00ff00"/>
<rect x="1108" y="491" width="5" height="3" fill="#00ff00"/>
<rect x="1109" y="492" width="3" height="1" fill="#000"/>
<rect x="1118" y="487" width="1" height="4" fill="#00ff00"/>
<rect x="1116" y="488" width="5" height="2" fill="#00ff00"/>
<rect x="1126" y="488" width="1" height="2" fill="#00ff00"/>
<rect x="1124" y="488" width="5" height="2" fill="#00ff00"/>
<rect x="1134" y="476" width="1" height="10" fill="#00ff00"/>
<rect x="1132" y="480" width="5" height="5" fill="#00ff00"/>
<rect x="1133" y="481" width="3" height="3" fill="#000"/>
<rect x="1142" y="474" width="1" height="17" fill="#00ff00"/>
<rect x="1140" y="480" width="5" height="4" fill="#00ff00"/>
<rect x="1141" y="481" width="3" height="2" fill="#fff"/>
<rect x="1150" y="480" width="1" height="6" fill="#00ff00"/>
<rect x="1148" y="481" width="5" height="4" fill="#00ff00"/>
<rect x="1149" y="482" width="3" height="2" fill="#000"/>
<rect x="1158" y="477" width="1" height="8" fill="#00ff00"/>
<rect x="1156" y="480" width="5" height="2" fill="#00ff00"/>
<rect x="1166" y="475" width="1" height="9" fill="#00ff00"/>
<rect x="1164" y="476" width="5" height="5" fill="#00ff00"/>
<rect x="1165" y="477" width="3" height="3" fill="#000"/>
<rect x="1174" y="473" width="1" height="5" fill="#00ff00"/>
<rect x="1172" y="474" width="5" height="2" fill="#00ff00"/>
<rect x="1182" y="462" width="1" height="7" fill="#00ff00"/>
<rect x="1180" y="466" width="5" height="3" fill="#00ff00"/>
<rect x="1181" y="467" width="3" height="1" fill="#000"/>
<rect x="1190" y="460" width="1" height="8" fill="#00ff00"/>
<rect x="1188" y="465" width="5" height="1" fill="#00ff00"/>
<rect x="1198" y="466" width="1" height="6" fill="#00ff00"/>
<rect x="1196" y="466" width="5" height="4" fill="#00ff00"/>
<rect x="1197" y="467" width="3" height="2" fill="#fff"/>
<rect x="1206" y="463" width="1" height="7" fill="#00ff00"/>
<rect x="1204" y="463" width="5" height="6" fill="#00ff00"/>
<rect x="1205" y="464" width="3" height="4" fill="#000"/>
<rect x="1214" y="462" width="1" height="8" fill="#00ff00"/>
<rect x="1212" y="463" width="5" height="6" fill="#00ff00"/>
<rect x="1213" y="464" width="3" height="4" fill="#fff"/>
<rect x="1222" y="467" width="1" height="2" fill="#00ff00"/>
<rect x="1220" y="467" width="5" height="2" fill="#00ff00"/>
<rect x="1230" y="468" width="1" height="4" fill="#00ff00"/>
<rect x="1228" y="469" width="5" height="1" fill="#00ff00"/>
<rect x="1238" y="452" width="1" height="18" fill="#00ff00"/>
<rect x="1236" y="454" width="5" height="16" fill="#00ff00"/>
<rect x="1237" y="455" width="3" height="14" fill="#000"/>
<rect x="1246" y="447" width="1" height="9" fill="#00ff00"/>
<rect x="1244" y="450" width="5" height="4" fill="#00ff00"/>
<rect x="1245" y="451" width="3" height="2" fill="#000"/>
<rect x="1254" y="439" width="1" height="11" fill="#00ff00"/>
<rect x="1252" y="445" width="5" height="4" fill="#00ff00"/>
<rect x="1253" y="446" width="3" height="2" fill="#000"/>
<rect x="1262" y="440" width="1" height="7" fill="#00ff00"/>
<rect x="1260" y="442" width="5" height="2" fill="#00ff00"/>
<polyline fill="none" stroke="#20b2aa" stroke-width="1" shape-rendering="auto" points="821.7,640.3 830.8,641.2 839.2,643.7 846.7,652.3 855,655.3 862.5,654 870.8,662.3 879.2,661.5 887,660.3 895,656.5 903.3,652.3 911.7,650.7 919.2,649.5 926.7,648.2 935,648.2 943.3,649.5 950.8,648.2 959.2,647 967,652 975,645.7 982.5,634.3 990.8,642.8 998.3,649.3 1006.7,634 1015,644.8 1022.5,656.5 1030.8,656.5 1038.8,645.3 1046.7,648.2 1050.8,614 1054.7,594.3 1062.5,615.7 1070.8,623.2 1078.7,625.3 1086.7,629 1094.7,630.7 1102.5,632.7 1110.8,633.5 1118.3,633.7 1126.7,634.3 1135,633.2 1142.5,634.3 1150.8,635.3 1159.2,634 1166.7,632.8 1173.3,632 1182.5,626.5 1190.8,627.7 1198.3,631.5 1206.7,631.8 1214.2,634 1222.5,635.3 1230.5,638.5 1238.3,628.7 1246.7,624.8 1254.7,622.3 1261.7,625.7"/>
<rect x="821.5" y="430.5" width="570" height="157" fill="none" stroke="#fff"/>
<rect x="821.5" y="589.5" width="570" height="77" fill="none" stroke="#fff"/>
<line x1="1391" y1="457.5" x2="1395" y2="457.5" stroke="#fff" stroke-width="1"/>
<text x="1397" y="459.6" font-size="9.4" fill="#fff" stroke="#fff" stroke-width=".2" >3263.0</text>
<line x1="1391" y1="489.5" x2="1395" y2="489.5" stroke="#fff" stroke-width="1"/>
<text x="1397" y="491.6" font-size="9.4" fill="#fff" stroke="#fff" stroke-width=".2" >3155.0</text>
<line x1="1391" y1="521.5" x2="1395" y2="521.5" stroke="#fff" stroke-width="1"/>
<text x="1397" y="523.6" font-size="9.4" fill="#fff" stroke="#fff" stroke-width=".2" >3050.0</text>
<line x1="1391" y1="553.5" x2="1395" y2="553.5" stroke="#fff" stroke-width="1"/>
<text x="1397" y="555.6" font-size="9.4" fill="#fff" stroke="#fff" stroke-width=".2" >2945.0</text>
<line x1="1391" y1="585.5" x2="1395" y2="585.5" stroke="#fff" stroke-width="1"/>
<text x="1397" y="587.6" font-size="9.4" fill="#fff" stroke="#fff" stroke-width=".2" >2840.0</text>
<rect x="1393" y="436" width="36" height="10" fill="#fff"/>
<text x="1397" y="443.6" font-size="9.4" fill="#000" stroke="#000" stroke-width=".2" >3310.4</text>

<text x="1395" y="599.6" font-size="9.4" fill="#fff" stroke="#fff" stroke-width=".2" >499.3231</text>
<line x1="1391" y1="632.5" x2="1395" y2="632.5" stroke="#fff" stroke-width="1"/>
<text x="1395" y="634.6" font-size="9.4" fill="#fff" stroke="#fff" stroke-width=".2" >100</text>
<line x1="1391" y1="643.5" x2="1395" y2="643.5" stroke="#fff" stroke-width="1"/>
<text x="1395" y="645.6" font-size="9.4" fill="#fff" stroke="#fff" stroke-width=".2" >0.00</text>

<text x="1395" y="654.6" font-size="9.4" fill="#fff" stroke="#fff" stroke-width=".2" >-100</text>

<text x="1395" y="662.6" font-size="9.4" fill="#fff" stroke="#fff" stroke-width=".2" >-219.117</text>
<line x1="821.5" y1="666" x2="821.5" y2="671" stroke="#fff" stroke-width="1"/>
<text x="821" y="678.5" font-size="9.4" fill="#fff" stroke="#fff" stroke-width=".2" >15 Sep 2010</text>
<line x1="885.5" y1="666" x2="885.5" y2="671" stroke="#fff" stroke-width="1"/>
<text x="885" y="678.5" font-size="9.4" fill="#fff" stroke="#fff" stroke-width=".2" >16 Sep 07:00</text>
<line x1="949.5" y1="666" x2="949.5" y2="671" stroke="#fff" stroke-width="1"/>
<text x="949" y="678.5" font-size="9.4" fill="#fff" stroke="#fff" stroke-width=".2" >17 Sep 09:00</text>
<line x1="1013.5" y1="666" x2="1013.5" y2="671" stroke="#fff" stroke-width="1"/>
<text x="1013" y="678.5" font-size="9.4" fill="#fff" stroke="#fff" stroke-width=".2" >21 Sep 04:00</text>
<line x1="1077.5" y1="666" x2="1077.5" y2="671" stroke="#fff" stroke-width="1"/>
<text x="1077" y="678.5" font-size="9.4" fill="#fff" stroke="#fff" stroke-width=".2" >11 Oct 03:00</text>
<line x1="1141.5" y1="666" x2="1141.5" y2="671" stroke="#fff" stroke-width="1"/>
<text x="1141" y="678.5" font-size="9.4" fill="#fff" stroke="#fff" stroke-width=".2" >13 Oct 04:00</text>
<line x1="1205.5" y1="666" x2="1205.5" y2="671" stroke="#fff" stroke-width="1"/>
<text x="1205" y="678.5" font-size="9.4" fill="#fff" stroke="#fff" stroke-width=".2" >14 Oct 07:00</text>
<rect x="825" y="433" width="175" height="12" fill="#000"/><text x="826" y="442" font-size="9.4" fill="#fff" stroke="#fff" stroke-width=".2" >IF1010,H1&#160;&#160;3305.2 3317.2 3298.6 3310.4</text>
<rect x="825" y="593.5" width="77" height="12" fill="#000"/><text x="826" y="602.5" font-size="9.4" fill="#fff" stroke="#fff" stroke-width=".2" >CCI(14) 163.0139</text>
<polygon points="1270,431 1280,431 1275,436" fill="#a0a8b0" shape-rendering="auto"/>
</svg>
<div class="a" style="left:189px;top:690px;width:1251px;height:1px;background:#fff"></div>
<div class="a" style="left:189px;top:693px;width:1251px;height:1px;background:#000"></div>
<div class="tabact" style="left:191px;top:693px;width:61px;height:19px"></div>
<div class="a" style="left:200px;top:696px;font-family:'Liberation Sans',sans-serif;font-size:10.5px;white-space:nowrap;line-height:12px">IFL2,M1</div>
<div class="a gray" style="left:261px;top:696px;font-family:'Liberation Sans',sans-serif;font-size:10.5px;white-space:nowrap;line-height:12px">IF1004,M15</div>
<div class="a gray" style="left:341px;top:696px;font-family:'Liberation Sans',sans-serif;font-size:10.5px;white-space:nowrap;line-height:12px">IF1011,M15</div>
<div class="a gray" style="left:420px;top:696px;font-family:'Liberation Sans',sans-serif;font-size:10.5px;white-space:nowrap;line-height:12px">IF1010,H1</div>
<div class="a" style="left:331px;top:696px;width:1px;height:12px;background:#8a887a"></div>
<div class="a" style="left:411px;top:696px;width:1px;height:12px;background:#8a887a"></div>
<div class="a" style="left:482px;top:696px;width:1px;height:12px;background:#8a887a"></div>
<svg class="a" style="left:1408px;top:697px" width="28" height="10"><path d="M6 1 L6 9 L2 5 Z M18 1 L18 9 L22 5 Z" fill="#aca899"/></svg>
<div class="a" style="left:0;top:714px;width:1440px;height:1px;background:#fff"></div>
<svg class="a" style="left:3px;top:720px" width="8" height="7" viewBox="0 0 8 7" ><path d="M1 1 L6 6 M6 1 L1 6" stroke="#000" stroke-width="1.7" fill="none"/></svg>
<div class="a" style="left:1px;top:731px;width:13px;height:115px;background:#7a96df"></div>
<div class="a" style="left:-11px;top:819px;width:36px;height:13px;color:#c8d6f8;font-size:11px;line-height:13px;transform:rotate(-90deg);white-space:nowrap;text-align:left;padding-left:3px">终端</div>
<div class="a" style="left:15px;top:716px;width:1422px;height:110px;background:#fff;border-left:1px solid #aca899;border-top:1px solid #aca899"></div>
<div class="lv-h" style="left:16px;top:717px;width:1420px;height:21px"></div>
<div class="a" style="left:145px;top:720px;width:1px;height:14px;background:#c5c2b2"></div><div class="a" style="left:146px;top:720px;width:1px;height:14px;background:#fff"></div>
<div class="a" style="left:570px;top:720px;width:1px;height:14px;background:#c5c2b2"></div><div class="a" style="left:571px;top:720px;width:1px;height:14px;background:#fff"></div>
<div class="a" style="left:1434px;top:720px;width:1px;height:14px;background:#c5c2b2"></div><div class="a" style="left:1435px;top:720px;width:1px;height:14px;background:#fff"></div>
<div class="a cj c11" style="left:25px;top:721px;color:#222">时间</div>
<div class="a cj c11" style="left:155px;top:721px;color:#222">起始</div>
<div class="a cj c11" style="left:582px;top:721px;color:#222">标题</div>
<div class="a" style="left:16px;top:738px;width:1420px;height:20px;background:#ebebeb;border-bottom:1px solid #d8d8d8"></div>
<svg class="a" style="left:17px;top:743px" width="14" height="10" viewBox="0 0 14 10" ><rect x="0.5" y="0.5" width="13" height="9" rx="1" fill="#f5e7a0" stroke="#a08a30"/><path d="M1 1 L7 6 L13 1 M1 9 L5 5 M13 9 L9 5" stroke="#a08a30" stroke-width="1" fill="none"/></svg>
<div class="a cj" style="left:38px;top:741px"><span class="mb">2007.09.25&#160;...</span></div>
<div class="a cj cb" style="left:150px;top:741px">順天國際投資集團（香港）有限公司<span class="mb">SKYWAY&#160;INTERNATIONAL&#160;INVESTME</span></div>
<div class="a cj" style="left:576px;top:741px"><span class="mb">What&#160;Is&#160;Automated&#160;Trading?</span></div>
<div class="a" style="left:16px;top:758px;width:1420px;height:20px;background:#fff;border-bottom:1px solid #d8d8d8"></div>
<svg class="a" style="left:17px;top:763px" width="14" height="10" viewBox="0 0 14 10" ><rect x="0.5" y="0.5" width="13" height="9" rx="1" fill="#f5e7a0" stroke="#a08a30"/><path d="M1 1 L7 6 L13 1 M1 9 L5 5 M13 9 L9 5" stroke="#a08a30" stroke-width="1" fill="none"/></svg>
<div class="a cj" style="left:38px;top:761px"><span class="mb">2007.09.25&#160;...</span></div>
<div class="a cj cb" style="left:150px;top:761px">順天國際投資集團（香港）有限公司<span class="mb">SKYWAY&#160;INTERNATIONAL&#160;INVESTME</span></div>
<div class="a cj" style="left:576px;top:761px"><span class="mb">Mobile&#160;Trading&#160;-&#160;It's&#160;Easy!</span></div>
<div class="a" style="left:16px;top:778px;width:1420px;height:20px;background:#ebebeb;border-bottom:1px solid #d8d8d8"></div>
<svg class="a" style="left:17px;top:783px" width="14" height="10" viewBox="0 0 14 10" ><rect x="0.5" y="0.5" width="13" height="9" rx="1" fill="#f5e7a0" stroke="#a08a30"/><path d="M1 1 L7 6 L13 1 M1 9 L5 5 M13 9 L9 5" stroke="#a08a30" stroke-width="1" fill="none"/></svg>
<div class="a cj" style="left:38px;top:781px"><span class="mb">2007.09.25&#160;...</span></div>
<div class="a cj cb" style="left:150px;top:781px">順天國際投資集團（香港）有限公司<span class="mb">SKYWAY&#160;INTERNATIONAL&#160;INVESTME</span></div>
<div class="a cj" style="left:576px;top:781px"><span class="mb">Welcome!</span></div>
<div class="a" style="left:145px;top:738px;width:1px;height:60px;background:#d4d4d4"></div>
<div class="a" style="left:570px;top:738px;width:1px;height:60px;background:#d4d4d4"></div>
<div class="a" style="left:15px;top:825px;width:1422px;height:1px;background:#000"></div>
<div class="tabact" style="left:62px;top:825px;width:44px;height:18px"></div>
<div class="a cj gray" style="left:27px;top:827px">警报</div>
<div class="a cj" style="left:71px;top:827px">邮箱</div>
<div class="a cj gray" style="left:116px;top:827px">智能交易</div>
<div class="a cj gray" style="left:185px;top:827px">日志</div>
<div class="a" style="left:174px;top:828px;width:1px;height:12px;background:#8a887a"></div>
<div class="a" style="left:218px;top:828px;width:1px;height:12px;background:#8a887a"></div>
<div class="a" style="left:1437px;top:716px;width:1px;height:130px;background:#fff"></div>
<div class="a" style="left:0;top:848px;width:1440px;height:1px;background:#d8d4c2"></div>
<div class="a" style="left:0;top:849px;width:1440px;height:1px;background:#fff"></div>
<div class="a cj c11" style="left:3px;top:853px">寻求帮助,请按<span class="m">F1</span>键</div>
<div class="a cj" style="left:574px;top:853px"><span class="m">Default</span></div>
<div class="a" style="left:568px;top:852px;width:1px;height:16px;background:#aca899"></div><div class="a" style="left:569px;top:852px;width:1px;height:16px;background:#fff"></div>
<div class="a" style="left:732px;top:852px;width:1px;height:16px;background:#aca899"></div><div class="a" style="left:733px;top:852px;width:1px;height:16px;background:#fff"></div>
<div class="a" style="left:848px;top:852px;width:1px;height:16px;background:#aca899"></div><div class="a" style="left:849px;top:852px;width:1px;height:16px;background:#fff"></div>
<div class="a" style="left:934px;top:852px;width:1px;height:16px;background:#aca899"></div><div class="a" style="left:935px;top:852px;width:1px;height:16px;background:#fff"></div>
<div class="a" style="left:1020px;top:852px;width:1px;height:16px;background:#aca899"></div><div class="a" style="left:1021px;top:852px;width:1px;height:16px;background:#fff"></div>
<div class="a" style="left:1106px;top:852px;width:1px;height:16px;background:#aca899"></div><div class="a" style="left:1107px;top:852px;width:1px;height:16px;background:#fff"></div>
<div class="a" style="left:1192px;top:852px;width:1px;height:16px;background:#aca899"></div><div class="a" style="left:1193px;top:852px;width:1px;height:16px;background:#fff"></div>
<div class="a" style="left:1278px;top:852px;width:1px;height:16px;background:#aca899"></div><div class="a" style="left:1279px;top:852px;width:1px;height:16px;background:#fff"></div>
<svg class="a" style="left:1283px;top:855px" width="26" height="12" shape-rendering="crispEdges"><rect x="0" y="0" width="2" height="11" fill="#a8281c"/><rect x="3" y="0" width="2" height="11" fill="#a8281c"/><rect x="6" y="0" width="2" height="11" fill="#a8281c"/><rect x="9" y="0" width="2" height="11" fill="#a8281c"/><rect x="12" y="0" width="2" height="11" fill="#a8281c"/><rect x="15" y="0" width="2" height="11" fill="#a8281c"/><rect x="18" y="0" width="2" height="11" fill="#a8281c"/><rect x="21" y="0" width="2" height="11" fill="#a8281c"/><rect x="24" y="0" width="2" height="11" fill="#a8281c"/><rect x="0" y="4" width="26" height="1" fill="#ece9d8" opacity=".5"/><rect x="0" y="8" width="26" height="1" fill="#ece9d8" opacity=".5"/></svg>
<div class="a cj c11" style="left:1343px;top:853px">没有连接</div>
</div></body></html>
